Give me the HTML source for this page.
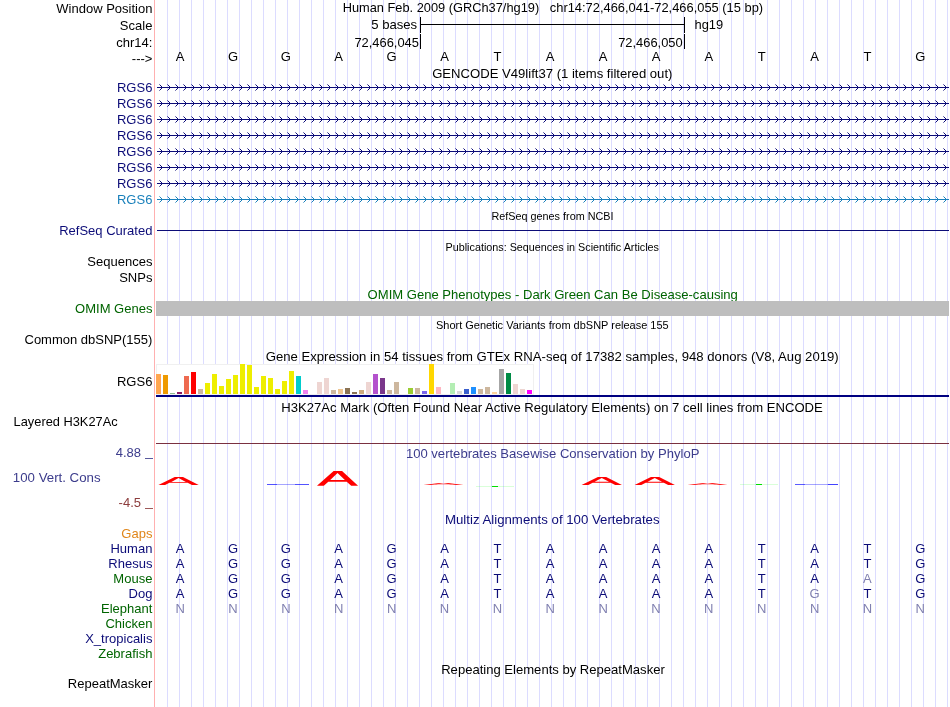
<!DOCTYPE html>
<html><head><meta charset="utf-8"><style>
html,body{margin:0;padding:0;background:#fff;width:950px;height:707px;overflow:hidden}
svg{display:block;will-change:transform}
text{font-family:"Liberation Sans",sans-serif}
</style></head><body>
<svg width="950" height="707" viewBox="0 0 950 707">
<rect width="950" height="707" fill="#fff"/>
<g>
<rect x="167" y="0" width="1" height="707" fill="#dcdcff" shape-rendering="crispEdges"/>
<rect x="179" y="0" width="1" height="707" fill="#dcdcff" shape-rendering="crispEdges"/>
<rect x="191" y="0" width="1" height="707" fill="#dcdcff" shape-rendering="crispEdges"/>
<rect x="203" y="0" width="1" height="707" fill="#dcdcff" shape-rendering="crispEdges"/>
<rect x="215" y="0" width="1" height="707" fill="#dcdcff" shape-rendering="crispEdges"/>
<rect x="227" y="0" width="1" height="707" fill="#dcdcff" shape-rendering="crispEdges"/>
<rect x="239" y="0" width="1" height="707" fill="#dcdcff" shape-rendering="crispEdges"/>
<rect x="251" y="0" width="1" height="707" fill="#dcdcff" shape-rendering="crispEdges"/>
<rect x="263" y="0" width="1" height="707" fill="#dcdcff" shape-rendering="crispEdges"/>
<rect x="275" y="0" width="1" height="707" fill="#dcdcff" shape-rendering="crispEdges"/>
<rect x="287" y="0" width="1" height="707" fill="#dcdcff" shape-rendering="crispEdges"/>
<rect x="299" y="0" width="1" height="707" fill="#dcdcff" shape-rendering="crispEdges"/>
<rect x="311" y="0" width="1" height="707" fill="#dcdcff" shape-rendering="crispEdges"/>
<rect x="323" y="0" width="1" height="707" fill="#dcdcff" shape-rendering="crispEdges"/>
<rect x="335" y="0" width="1" height="707" fill="#dcdcff" shape-rendering="crispEdges"/>
<rect x="347" y="0" width="1" height="707" fill="#dcdcff" shape-rendering="crispEdges"/>
<rect x="359" y="0" width="1" height="707" fill="#dcdcff" shape-rendering="crispEdges"/>
<rect x="371" y="0" width="1" height="707" fill="#dcdcff" shape-rendering="crispEdges"/>
<rect x="383" y="0" width="1" height="707" fill="#dcdcff" shape-rendering="crispEdges"/>
<rect x="395" y="0" width="1" height="707" fill="#dcdcff" shape-rendering="crispEdges"/>
<rect x="407" y="0" width="1" height="707" fill="#dcdcff" shape-rendering="crispEdges"/>
<rect x="419" y="0" width="1" height="707" fill="#dcdcff" shape-rendering="crispEdges"/>
<rect x="431" y="0" width="1" height="707" fill="#dcdcff" shape-rendering="crispEdges"/>
<rect x="443" y="0" width="1" height="707" fill="#dcdcff" shape-rendering="crispEdges"/>
<rect x="455" y="0" width="1" height="707" fill="#dcdcff" shape-rendering="crispEdges"/>
<rect x="467" y="0" width="1" height="707" fill="#dcdcff" shape-rendering="crispEdges"/>
<rect x="479" y="0" width="1" height="707" fill="#dcdcff" shape-rendering="crispEdges"/>
<rect x="491" y="0" width="1" height="707" fill="#dcdcff" shape-rendering="crispEdges"/>
<rect x="503" y="0" width="1" height="707" fill="#dcdcff" shape-rendering="crispEdges"/>
<rect x="515" y="0" width="1" height="707" fill="#dcdcff" shape-rendering="crispEdges"/>
<rect x="527" y="0" width="1" height="707" fill="#dcdcff" shape-rendering="crispEdges"/>
<rect x="539" y="0" width="1" height="707" fill="#dcdcff" shape-rendering="crispEdges"/>
<rect x="551" y="0" width="1" height="707" fill="#dcdcff" shape-rendering="crispEdges"/>
<rect x="563" y="0" width="1" height="707" fill="#dcdcff" shape-rendering="crispEdges"/>
<rect x="575" y="0" width="1" height="707" fill="#dcdcff" shape-rendering="crispEdges"/>
<rect x="587" y="0" width="1" height="707" fill="#dcdcff" shape-rendering="crispEdges"/>
<rect x="599" y="0" width="1" height="707" fill="#dcdcff" shape-rendering="crispEdges"/>
<rect x="611" y="0" width="1" height="707" fill="#dcdcff" shape-rendering="crispEdges"/>
<rect x="623" y="0" width="1" height="707" fill="#dcdcff" shape-rendering="crispEdges"/>
<rect x="635" y="0" width="1" height="707" fill="#dcdcff" shape-rendering="crispEdges"/>
<rect x="647" y="0" width="1" height="707" fill="#dcdcff" shape-rendering="crispEdges"/>
<rect x="659" y="0" width="1" height="707" fill="#dcdcff" shape-rendering="crispEdges"/>
<rect x="671" y="0" width="1" height="707" fill="#dcdcff" shape-rendering="crispEdges"/>
<rect x="683" y="0" width="1" height="707" fill="#dcdcff" shape-rendering="crispEdges"/>
<rect x="695" y="0" width="1" height="707" fill="#dcdcff" shape-rendering="crispEdges"/>
<rect x="707" y="0" width="1" height="707" fill="#dcdcff" shape-rendering="crispEdges"/>
<rect x="719" y="0" width="1" height="707" fill="#dcdcff" shape-rendering="crispEdges"/>
<rect x="731" y="0" width="1" height="707" fill="#dcdcff" shape-rendering="crispEdges"/>
<rect x="743" y="0" width="1" height="707" fill="#dcdcff" shape-rendering="crispEdges"/>
<rect x="755" y="0" width="1" height="707" fill="#dcdcff" shape-rendering="crispEdges"/>
<rect x="767" y="0" width="1" height="707" fill="#dcdcff" shape-rendering="crispEdges"/>
<rect x="779" y="0" width="1" height="707" fill="#dcdcff" shape-rendering="crispEdges"/>
<rect x="791" y="0" width="1" height="707" fill="#dcdcff" shape-rendering="crispEdges"/>
<rect x="803" y="0" width="1" height="707" fill="#dcdcff" shape-rendering="crispEdges"/>
<rect x="815" y="0" width="1" height="707" fill="#dcdcff" shape-rendering="crispEdges"/>
<rect x="827" y="0" width="1" height="707" fill="#dcdcff" shape-rendering="crispEdges"/>
<rect x="839" y="0" width="1" height="707" fill="#dcdcff" shape-rendering="crispEdges"/>
<rect x="851" y="0" width="1" height="707" fill="#dcdcff" shape-rendering="crispEdges"/>
<rect x="863" y="0" width="1" height="707" fill="#dcdcff" shape-rendering="crispEdges"/>
<rect x="875" y="0" width="1" height="707" fill="#dcdcff" shape-rendering="crispEdges"/>
<rect x="887" y="0" width="1" height="707" fill="#dcdcff" shape-rendering="crispEdges"/>
<rect x="899" y="0" width="1" height="707" fill="#dcdcff" shape-rendering="crispEdges"/>
<rect x="911" y="0" width="1" height="707" fill="#dcdcff" shape-rendering="crispEdges"/>
<rect x="923" y="0" width="1" height="707" fill="#dcdcff" shape-rendering="crispEdges"/>
<rect x="935" y="0" width="1" height="707" fill="#dcdcff" shape-rendering="crispEdges"/>
<rect x="947" y="0" width="1" height="707" fill="#dcdcff" shape-rendering="crispEdges"/>
<rect x="154" y="0" width="1" height="707" fill="#ffb0b0" shape-rendering="crispEdges"/>
<text x="152.4" y="12.7" fill="#000" font-size="13.0" text-anchor="end">Window Position</text>
<text x="152.4" y="29.5" fill="#000" font-size="13.0" text-anchor="end">Scale</text>
<text x="152.4" y="46.9" fill="#000" font-size="13.0" text-anchor="end">chr14:</text>
<text x="152.4" y="63" fill="#000" font-size="13.0" text-anchor="end">---&gt;</text>
<text x="342.7" y="11.6" fill="#000" font-size="13.0" textLength="196.5" lengthAdjust="spacingAndGlyphs">Human Feb. 2009 (GRCh37/hg19)</text>
<text x="549.8" y="11.6" fill="#000" font-size="13.0" textLength="213.3" lengthAdjust="spacingAndGlyphs">chr14:72,466,041-72,466,055 (15 bp)</text>
<text x="371.2" y="29" fill="#000" font-size="13.0" textLength="46" lengthAdjust="spacingAndGlyphs">5 bases</text>
<text x="694.5" y="29" fill="#000" font-size="13.0" textLength="28.7" lengthAdjust="spacingAndGlyphs">hg19</text>
<text x="354.4" y="47" fill="#000" font-size="13.0" textLength="64.6" lengthAdjust="spacingAndGlyphs">72,466,045</text>
<text x="618.2" y="47" fill="#000" font-size="13.0" textLength="64.5" lengthAdjust="spacingAndGlyphs">72,466,050</text>
<rect x="420" y="17" width="1" height="16" fill="#000" shape-rendering="crispEdges"/>
<rect x="684" y="17" width="1" height="16" fill="#000" shape-rendering="crispEdges"/>
<rect x="421" y="24" width="263" height="1" fill="#000" shape-rendering="crispEdges"/>
<rect x="420" y="34" width="1" height="15" fill="#000" shape-rendering="crispEdges"/>
<rect x="684" y="34" width="1" height="15" fill="#000" shape-rendering="crispEdges"/>
<text x="180.1" y="60.5" fill="#000" font-size="13.0" text-anchor="middle">A</text>
<text x="233.0" y="60.5" fill="#000" font-size="13.0" text-anchor="middle">G</text>
<text x="285.9" y="60.5" fill="#000" font-size="13.0" text-anchor="middle">G</text>
<text x="338.7" y="60.5" fill="#000" font-size="13.0" text-anchor="middle">A</text>
<text x="391.6" y="60.5" fill="#000" font-size="13.0" text-anchor="middle">G</text>
<text x="444.5" y="60.5" fill="#000" font-size="13.0" text-anchor="middle">A</text>
<text x="497.4" y="60.5" fill="#000" font-size="13.0" text-anchor="middle">T</text>
<text x="550.2" y="60.5" fill="#000" font-size="13.0" text-anchor="middle">A</text>
<text x="603.1" y="60.5" fill="#000" font-size="13.0" text-anchor="middle">A</text>
<text x="656.0" y="60.5" fill="#000" font-size="13.0" text-anchor="middle">A</text>
<text x="708.8" y="60.5" fill="#000" font-size="13.0" text-anchor="middle">A</text>
<text x="761.7" y="60.5" fill="#000" font-size="13.0" text-anchor="middle">T</text>
<text x="814.6" y="60.5" fill="#000" font-size="13.0" text-anchor="middle">A</text>
<text x="867.4" y="60.5" fill="#000" font-size="13.0" text-anchor="middle">T</text>
<text x="920.3" y="60.5" fill="#000" font-size="13.0" text-anchor="middle">G</text>
<text x="432.2" y="78" fill="#000" font-size="13.0" textLength="240.2" lengthAdjust="spacingAndGlyphs">GENCODE V49lift37 (1 items filtered out)</text>
<rect x="157" y="87" width="792" height="1" fill="#0c0c78" shape-rendering="crispEdges"/>
<path d="M160 85h1v1h-1z M161 86h1v3h-1z M160 89h1v1h-1z M168 85h1v1h-1z M169 86h1v3h-1z M168 89h1v1h-1z M176 85h1v1h-1z M177 86h1v3h-1z M176 89h1v1h-1z M184 85h1v1h-1z M185 86h1v3h-1z M184 89h1v1h-1z M192 85h1v1h-1z M193 86h1v3h-1z M192 89h1v1h-1z M200 85h1v1h-1z M201 86h1v3h-1z M200 89h1v1h-1z M208 85h1v1h-1z M209 86h1v3h-1z M208 89h1v1h-1z M216 85h1v1h-1z M217 86h1v3h-1z M216 89h1v1h-1z M224 85h1v1h-1z M225 86h1v3h-1z M224 89h1v1h-1z M232 85h1v1h-1z M233 86h1v3h-1z M232 89h1v1h-1z M240 85h1v1h-1z M241 86h1v3h-1z M240 89h1v1h-1z M248 85h1v1h-1z M249 86h1v3h-1z M248 89h1v1h-1z M256 85h1v1h-1z M257 86h1v3h-1z M256 89h1v1h-1z M264 85h1v1h-1z M265 86h1v3h-1z M264 89h1v1h-1z M272 85h1v1h-1z M273 86h1v3h-1z M272 89h1v1h-1z M280 85h1v1h-1z M281 86h1v3h-1z M280 89h1v1h-1z M288 85h1v1h-1z M289 86h1v3h-1z M288 89h1v1h-1z M296 85h1v1h-1z M297 86h1v3h-1z M296 89h1v1h-1z M304 85h1v1h-1z M305 86h1v3h-1z M304 89h1v1h-1z M312 85h1v1h-1z M313 86h1v3h-1z M312 89h1v1h-1z M320 85h1v1h-1z M321 86h1v3h-1z M320 89h1v1h-1z M328 85h1v1h-1z M329 86h1v3h-1z M328 89h1v1h-1z M336 85h1v1h-1z M337 86h1v3h-1z M336 89h1v1h-1z M344 85h1v1h-1z M345 86h1v3h-1z M344 89h1v1h-1z M352 85h1v1h-1z M353 86h1v3h-1z M352 89h1v1h-1z M360 85h1v1h-1z M361 86h1v3h-1z M360 89h1v1h-1z M368 85h1v1h-1z M369 86h1v3h-1z M368 89h1v1h-1z M376 85h1v1h-1z M377 86h1v3h-1z M376 89h1v1h-1z M384 85h1v1h-1z M385 86h1v3h-1z M384 89h1v1h-1z M392 85h1v1h-1z M393 86h1v3h-1z M392 89h1v1h-1z M400 85h1v1h-1z M401 86h1v3h-1z M400 89h1v1h-1z M408 85h1v1h-1z M409 86h1v3h-1z M408 89h1v1h-1z M416 85h1v1h-1z M417 86h1v3h-1z M416 89h1v1h-1z M424 85h1v1h-1z M425 86h1v3h-1z M424 89h1v1h-1z M432 85h1v1h-1z M433 86h1v3h-1z M432 89h1v1h-1z M440 85h1v1h-1z M441 86h1v3h-1z M440 89h1v1h-1z M448 85h1v1h-1z M449 86h1v3h-1z M448 89h1v1h-1z M456 85h1v1h-1z M457 86h1v3h-1z M456 89h1v1h-1z M464 85h1v1h-1z M465 86h1v3h-1z M464 89h1v1h-1z M472 85h1v1h-1z M473 86h1v3h-1z M472 89h1v1h-1z M480 85h1v1h-1z M481 86h1v3h-1z M480 89h1v1h-1z M488 85h1v1h-1z M489 86h1v3h-1z M488 89h1v1h-1z M496 85h1v1h-1z M497 86h1v3h-1z M496 89h1v1h-1z M504 85h1v1h-1z M505 86h1v3h-1z M504 89h1v1h-1z M512 85h1v1h-1z M513 86h1v3h-1z M512 89h1v1h-1z M520 85h1v1h-1z M521 86h1v3h-1z M520 89h1v1h-1z M528 85h1v1h-1z M529 86h1v3h-1z M528 89h1v1h-1z M536 85h1v1h-1z M537 86h1v3h-1z M536 89h1v1h-1z M544 85h1v1h-1z M545 86h1v3h-1z M544 89h1v1h-1z M552 85h1v1h-1z M553 86h1v3h-1z M552 89h1v1h-1z M560 85h1v1h-1z M561 86h1v3h-1z M560 89h1v1h-1z M568 85h1v1h-1z M569 86h1v3h-1z M568 89h1v1h-1z M576 85h1v1h-1z M577 86h1v3h-1z M576 89h1v1h-1z M584 85h1v1h-1z M585 86h1v3h-1z M584 89h1v1h-1z M592 85h1v1h-1z M593 86h1v3h-1z M592 89h1v1h-1z M600 85h1v1h-1z M601 86h1v3h-1z M600 89h1v1h-1z M608 85h1v1h-1z M609 86h1v3h-1z M608 89h1v1h-1z M616 85h1v1h-1z M617 86h1v3h-1z M616 89h1v1h-1z M624 85h1v1h-1z M625 86h1v3h-1z M624 89h1v1h-1z M632 85h1v1h-1z M633 86h1v3h-1z M632 89h1v1h-1z M640 85h1v1h-1z M641 86h1v3h-1z M640 89h1v1h-1z M648 85h1v1h-1z M649 86h1v3h-1z M648 89h1v1h-1z M656 85h1v1h-1z M657 86h1v3h-1z M656 89h1v1h-1z M664 85h1v1h-1z M665 86h1v3h-1z M664 89h1v1h-1z M672 85h1v1h-1z M673 86h1v3h-1z M672 89h1v1h-1z M680 85h1v1h-1z M681 86h1v3h-1z M680 89h1v1h-1z M688 85h1v1h-1z M689 86h1v3h-1z M688 89h1v1h-1z M696 85h1v1h-1z M697 86h1v3h-1z M696 89h1v1h-1z M704 85h1v1h-1z M705 86h1v3h-1z M704 89h1v1h-1z M712 85h1v1h-1z M713 86h1v3h-1z M712 89h1v1h-1z M720 85h1v1h-1z M721 86h1v3h-1z M720 89h1v1h-1z M728 85h1v1h-1z M729 86h1v3h-1z M728 89h1v1h-1z M736 85h1v1h-1z M737 86h1v3h-1z M736 89h1v1h-1z M744 85h1v1h-1z M745 86h1v3h-1z M744 89h1v1h-1z M752 85h1v1h-1z M753 86h1v3h-1z M752 89h1v1h-1z M760 85h1v1h-1z M761 86h1v3h-1z M760 89h1v1h-1z M768 85h1v1h-1z M769 86h1v3h-1z M768 89h1v1h-1z M776 85h1v1h-1z M777 86h1v3h-1z M776 89h1v1h-1z M784 85h1v1h-1z M785 86h1v3h-1z M784 89h1v1h-1z M792 85h1v1h-1z M793 86h1v3h-1z M792 89h1v1h-1z M800 85h1v1h-1z M801 86h1v3h-1z M800 89h1v1h-1z M808 85h1v1h-1z M809 86h1v3h-1z M808 89h1v1h-1z M816 85h1v1h-1z M817 86h1v3h-1z M816 89h1v1h-1z M824 85h1v1h-1z M825 86h1v3h-1z M824 89h1v1h-1z M832 85h1v1h-1z M833 86h1v3h-1z M832 89h1v1h-1z M840 85h1v1h-1z M841 86h1v3h-1z M840 89h1v1h-1z M848 85h1v1h-1z M849 86h1v3h-1z M848 89h1v1h-1z M856 85h1v1h-1z M857 86h1v3h-1z M856 89h1v1h-1z M864 85h1v1h-1z M865 86h1v3h-1z M864 89h1v1h-1z M872 85h1v1h-1z M873 86h1v3h-1z M872 89h1v1h-1z M880 85h1v1h-1z M881 86h1v3h-1z M880 89h1v1h-1z M888 85h1v1h-1z M889 86h1v3h-1z M888 89h1v1h-1z M896 85h1v1h-1z M897 86h1v3h-1z M896 89h1v1h-1z M904 85h1v1h-1z M905 86h1v3h-1z M904 89h1v1h-1z M912 85h1v1h-1z M913 86h1v3h-1z M912 89h1v1h-1z M920 85h1v1h-1z M921 86h1v3h-1z M920 89h1v1h-1z M928 85h1v1h-1z M929 86h1v3h-1z M928 89h1v1h-1z M936 85h1v1h-1z M937 86h1v3h-1z M936 89h1v1h-1z M944 85h1v1h-1z M945 86h1v3h-1z M944 89h1v1h-1z" fill="#0c0c78" shape-rendering="crispEdges"/>
<path d="M159 84h1v1h-1z M159 90h1v1h-1z M167 84h1v1h-1z M167 90h1v1h-1z M175 84h1v1h-1z M175 90h1v1h-1z M183 84h1v1h-1z M183 90h1v1h-1z M191 84h1v1h-1z M191 90h1v1h-1z M199 84h1v1h-1z M199 90h1v1h-1z M207 84h1v1h-1z M207 90h1v1h-1z M215 84h1v1h-1z M215 90h1v1h-1z M223 84h1v1h-1z M223 90h1v1h-1z M231 84h1v1h-1z M231 90h1v1h-1z M239 84h1v1h-1z M239 90h1v1h-1z M247 84h1v1h-1z M247 90h1v1h-1z M255 84h1v1h-1z M255 90h1v1h-1z M263 84h1v1h-1z M263 90h1v1h-1z M271 84h1v1h-1z M271 90h1v1h-1z M279 84h1v1h-1z M279 90h1v1h-1z M287 84h1v1h-1z M287 90h1v1h-1z M295 84h1v1h-1z M295 90h1v1h-1z M303 84h1v1h-1z M303 90h1v1h-1z M311 84h1v1h-1z M311 90h1v1h-1z M319 84h1v1h-1z M319 90h1v1h-1z M327 84h1v1h-1z M327 90h1v1h-1z M335 84h1v1h-1z M335 90h1v1h-1z M343 84h1v1h-1z M343 90h1v1h-1z M351 84h1v1h-1z M351 90h1v1h-1z M359 84h1v1h-1z M359 90h1v1h-1z M367 84h1v1h-1z M367 90h1v1h-1z M375 84h1v1h-1z M375 90h1v1h-1z M383 84h1v1h-1z M383 90h1v1h-1z M391 84h1v1h-1z M391 90h1v1h-1z M399 84h1v1h-1z M399 90h1v1h-1z M407 84h1v1h-1z M407 90h1v1h-1z M415 84h1v1h-1z M415 90h1v1h-1z M423 84h1v1h-1z M423 90h1v1h-1z M431 84h1v1h-1z M431 90h1v1h-1z M439 84h1v1h-1z M439 90h1v1h-1z M447 84h1v1h-1z M447 90h1v1h-1z M455 84h1v1h-1z M455 90h1v1h-1z M463 84h1v1h-1z M463 90h1v1h-1z M471 84h1v1h-1z M471 90h1v1h-1z M479 84h1v1h-1z M479 90h1v1h-1z M487 84h1v1h-1z M487 90h1v1h-1z M495 84h1v1h-1z M495 90h1v1h-1z M503 84h1v1h-1z M503 90h1v1h-1z M511 84h1v1h-1z M511 90h1v1h-1z M519 84h1v1h-1z M519 90h1v1h-1z M527 84h1v1h-1z M527 90h1v1h-1z M535 84h1v1h-1z M535 90h1v1h-1z M543 84h1v1h-1z M543 90h1v1h-1z M551 84h1v1h-1z M551 90h1v1h-1z M559 84h1v1h-1z M559 90h1v1h-1z M567 84h1v1h-1z M567 90h1v1h-1z M575 84h1v1h-1z M575 90h1v1h-1z M583 84h1v1h-1z M583 90h1v1h-1z M591 84h1v1h-1z M591 90h1v1h-1z M599 84h1v1h-1z M599 90h1v1h-1z M607 84h1v1h-1z M607 90h1v1h-1z M615 84h1v1h-1z M615 90h1v1h-1z M623 84h1v1h-1z M623 90h1v1h-1z M631 84h1v1h-1z M631 90h1v1h-1z M639 84h1v1h-1z M639 90h1v1h-1z M647 84h1v1h-1z M647 90h1v1h-1z M655 84h1v1h-1z M655 90h1v1h-1z M663 84h1v1h-1z M663 90h1v1h-1z M671 84h1v1h-1z M671 90h1v1h-1z M679 84h1v1h-1z M679 90h1v1h-1z M687 84h1v1h-1z M687 90h1v1h-1z M695 84h1v1h-1z M695 90h1v1h-1z M703 84h1v1h-1z M703 90h1v1h-1z M711 84h1v1h-1z M711 90h1v1h-1z M719 84h1v1h-1z M719 90h1v1h-1z M727 84h1v1h-1z M727 90h1v1h-1z M735 84h1v1h-1z M735 90h1v1h-1z M743 84h1v1h-1z M743 90h1v1h-1z M751 84h1v1h-1z M751 90h1v1h-1z M759 84h1v1h-1z M759 90h1v1h-1z M767 84h1v1h-1z M767 90h1v1h-1z M775 84h1v1h-1z M775 90h1v1h-1z M783 84h1v1h-1z M783 90h1v1h-1z M791 84h1v1h-1z M791 90h1v1h-1z M799 84h1v1h-1z M799 90h1v1h-1z M807 84h1v1h-1z M807 90h1v1h-1z M815 84h1v1h-1z M815 90h1v1h-1z M823 84h1v1h-1z M823 90h1v1h-1z M831 84h1v1h-1z M831 90h1v1h-1z M839 84h1v1h-1z M839 90h1v1h-1z M847 84h1v1h-1z M847 90h1v1h-1z M855 84h1v1h-1z M855 90h1v1h-1z M863 84h1v1h-1z M863 90h1v1h-1z M871 84h1v1h-1z M871 90h1v1h-1z M879 84h1v1h-1z M879 90h1v1h-1z M887 84h1v1h-1z M887 90h1v1h-1z M895 84h1v1h-1z M895 90h1v1h-1z M903 84h1v1h-1z M903 90h1v1h-1z M911 84h1v1h-1z M911 90h1v1h-1z M919 84h1v1h-1z M919 90h1v1h-1z M927 84h1v1h-1z M927 90h1v1h-1z M935 84h1v1h-1z M935 90h1v1h-1z M943 84h1v1h-1z M943 90h1v1h-1z" fill="#0c0c78" opacity="0.55" shape-rendering="crispEdges"/>
<text x="152.4" y="91.7" fill="#0c0c78" font-size="13.0" text-anchor="end">RGS6</text>
<rect x="157" y="103" width="792" height="1" fill="#0c0c78" shape-rendering="crispEdges"/>
<path d="M160 101h1v1h-1z M161 102h1v3h-1z M160 105h1v1h-1z M168 101h1v1h-1z M169 102h1v3h-1z M168 105h1v1h-1z M176 101h1v1h-1z M177 102h1v3h-1z M176 105h1v1h-1z M184 101h1v1h-1z M185 102h1v3h-1z M184 105h1v1h-1z M192 101h1v1h-1z M193 102h1v3h-1z M192 105h1v1h-1z M200 101h1v1h-1z M201 102h1v3h-1z M200 105h1v1h-1z M208 101h1v1h-1z M209 102h1v3h-1z M208 105h1v1h-1z M216 101h1v1h-1z M217 102h1v3h-1z M216 105h1v1h-1z M224 101h1v1h-1z M225 102h1v3h-1z M224 105h1v1h-1z M232 101h1v1h-1z M233 102h1v3h-1z M232 105h1v1h-1z M240 101h1v1h-1z M241 102h1v3h-1z M240 105h1v1h-1z M248 101h1v1h-1z M249 102h1v3h-1z M248 105h1v1h-1z M256 101h1v1h-1z M257 102h1v3h-1z M256 105h1v1h-1z M264 101h1v1h-1z M265 102h1v3h-1z M264 105h1v1h-1z M272 101h1v1h-1z M273 102h1v3h-1z M272 105h1v1h-1z M280 101h1v1h-1z M281 102h1v3h-1z M280 105h1v1h-1z M288 101h1v1h-1z M289 102h1v3h-1z M288 105h1v1h-1z M296 101h1v1h-1z M297 102h1v3h-1z M296 105h1v1h-1z M304 101h1v1h-1z M305 102h1v3h-1z M304 105h1v1h-1z M312 101h1v1h-1z M313 102h1v3h-1z M312 105h1v1h-1z M320 101h1v1h-1z M321 102h1v3h-1z M320 105h1v1h-1z M328 101h1v1h-1z M329 102h1v3h-1z M328 105h1v1h-1z M336 101h1v1h-1z M337 102h1v3h-1z M336 105h1v1h-1z M344 101h1v1h-1z M345 102h1v3h-1z M344 105h1v1h-1z M352 101h1v1h-1z M353 102h1v3h-1z M352 105h1v1h-1z M360 101h1v1h-1z M361 102h1v3h-1z M360 105h1v1h-1z M368 101h1v1h-1z M369 102h1v3h-1z M368 105h1v1h-1z M376 101h1v1h-1z M377 102h1v3h-1z M376 105h1v1h-1z M384 101h1v1h-1z M385 102h1v3h-1z M384 105h1v1h-1z M392 101h1v1h-1z M393 102h1v3h-1z M392 105h1v1h-1z M400 101h1v1h-1z M401 102h1v3h-1z M400 105h1v1h-1z M408 101h1v1h-1z M409 102h1v3h-1z M408 105h1v1h-1z M416 101h1v1h-1z M417 102h1v3h-1z M416 105h1v1h-1z M424 101h1v1h-1z M425 102h1v3h-1z M424 105h1v1h-1z M432 101h1v1h-1z M433 102h1v3h-1z M432 105h1v1h-1z M440 101h1v1h-1z M441 102h1v3h-1z M440 105h1v1h-1z M448 101h1v1h-1z M449 102h1v3h-1z M448 105h1v1h-1z M456 101h1v1h-1z M457 102h1v3h-1z M456 105h1v1h-1z M464 101h1v1h-1z M465 102h1v3h-1z M464 105h1v1h-1z M472 101h1v1h-1z M473 102h1v3h-1z M472 105h1v1h-1z M480 101h1v1h-1z M481 102h1v3h-1z M480 105h1v1h-1z M488 101h1v1h-1z M489 102h1v3h-1z M488 105h1v1h-1z M496 101h1v1h-1z M497 102h1v3h-1z M496 105h1v1h-1z M504 101h1v1h-1z M505 102h1v3h-1z M504 105h1v1h-1z M512 101h1v1h-1z M513 102h1v3h-1z M512 105h1v1h-1z M520 101h1v1h-1z M521 102h1v3h-1z M520 105h1v1h-1z M528 101h1v1h-1z M529 102h1v3h-1z M528 105h1v1h-1z M536 101h1v1h-1z M537 102h1v3h-1z M536 105h1v1h-1z M544 101h1v1h-1z M545 102h1v3h-1z M544 105h1v1h-1z M552 101h1v1h-1z M553 102h1v3h-1z M552 105h1v1h-1z M560 101h1v1h-1z M561 102h1v3h-1z M560 105h1v1h-1z M568 101h1v1h-1z M569 102h1v3h-1z M568 105h1v1h-1z M576 101h1v1h-1z M577 102h1v3h-1z M576 105h1v1h-1z M584 101h1v1h-1z M585 102h1v3h-1z M584 105h1v1h-1z M592 101h1v1h-1z M593 102h1v3h-1z M592 105h1v1h-1z M600 101h1v1h-1z M601 102h1v3h-1z M600 105h1v1h-1z M608 101h1v1h-1z M609 102h1v3h-1z M608 105h1v1h-1z M616 101h1v1h-1z M617 102h1v3h-1z M616 105h1v1h-1z M624 101h1v1h-1z M625 102h1v3h-1z M624 105h1v1h-1z M632 101h1v1h-1z M633 102h1v3h-1z M632 105h1v1h-1z M640 101h1v1h-1z M641 102h1v3h-1z M640 105h1v1h-1z M648 101h1v1h-1z M649 102h1v3h-1z M648 105h1v1h-1z M656 101h1v1h-1z M657 102h1v3h-1z M656 105h1v1h-1z M664 101h1v1h-1z M665 102h1v3h-1z M664 105h1v1h-1z M672 101h1v1h-1z M673 102h1v3h-1z M672 105h1v1h-1z M680 101h1v1h-1z M681 102h1v3h-1z M680 105h1v1h-1z M688 101h1v1h-1z M689 102h1v3h-1z M688 105h1v1h-1z M696 101h1v1h-1z M697 102h1v3h-1z M696 105h1v1h-1z M704 101h1v1h-1z M705 102h1v3h-1z M704 105h1v1h-1z M712 101h1v1h-1z M713 102h1v3h-1z M712 105h1v1h-1z M720 101h1v1h-1z M721 102h1v3h-1z M720 105h1v1h-1z M728 101h1v1h-1z M729 102h1v3h-1z M728 105h1v1h-1z M736 101h1v1h-1z M737 102h1v3h-1z M736 105h1v1h-1z M744 101h1v1h-1z M745 102h1v3h-1z M744 105h1v1h-1z M752 101h1v1h-1z M753 102h1v3h-1z M752 105h1v1h-1z M760 101h1v1h-1z M761 102h1v3h-1z M760 105h1v1h-1z M768 101h1v1h-1z M769 102h1v3h-1z M768 105h1v1h-1z M776 101h1v1h-1z M777 102h1v3h-1z M776 105h1v1h-1z M784 101h1v1h-1z M785 102h1v3h-1z M784 105h1v1h-1z M792 101h1v1h-1z M793 102h1v3h-1z M792 105h1v1h-1z M800 101h1v1h-1z M801 102h1v3h-1z M800 105h1v1h-1z M808 101h1v1h-1z M809 102h1v3h-1z M808 105h1v1h-1z M816 101h1v1h-1z M817 102h1v3h-1z M816 105h1v1h-1z M824 101h1v1h-1z M825 102h1v3h-1z M824 105h1v1h-1z M832 101h1v1h-1z M833 102h1v3h-1z M832 105h1v1h-1z M840 101h1v1h-1z M841 102h1v3h-1z M840 105h1v1h-1z M848 101h1v1h-1z M849 102h1v3h-1z M848 105h1v1h-1z M856 101h1v1h-1z M857 102h1v3h-1z M856 105h1v1h-1z M864 101h1v1h-1z M865 102h1v3h-1z M864 105h1v1h-1z M872 101h1v1h-1z M873 102h1v3h-1z M872 105h1v1h-1z M880 101h1v1h-1z M881 102h1v3h-1z M880 105h1v1h-1z M888 101h1v1h-1z M889 102h1v3h-1z M888 105h1v1h-1z M896 101h1v1h-1z M897 102h1v3h-1z M896 105h1v1h-1z M904 101h1v1h-1z M905 102h1v3h-1z M904 105h1v1h-1z M912 101h1v1h-1z M913 102h1v3h-1z M912 105h1v1h-1z M920 101h1v1h-1z M921 102h1v3h-1z M920 105h1v1h-1z M928 101h1v1h-1z M929 102h1v3h-1z M928 105h1v1h-1z M936 101h1v1h-1z M937 102h1v3h-1z M936 105h1v1h-1z M944 101h1v1h-1z M945 102h1v3h-1z M944 105h1v1h-1z" fill="#0c0c78" shape-rendering="crispEdges"/>
<path d="M159 100h1v1h-1z M159 106h1v1h-1z M167 100h1v1h-1z M167 106h1v1h-1z M175 100h1v1h-1z M175 106h1v1h-1z M183 100h1v1h-1z M183 106h1v1h-1z M191 100h1v1h-1z M191 106h1v1h-1z M199 100h1v1h-1z M199 106h1v1h-1z M207 100h1v1h-1z M207 106h1v1h-1z M215 100h1v1h-1z M215 106h1v1h-1z M223 100h1v1h-1z M223 106h1v1h-1z M231 100h1v1h-1z M231 106h1v1h-1z M239 100h1v1h-1z M239 106h1v1h-1z M247 100h1v1h-1z M247 106h1v1h-1z M255 100h1v1h-1z M255 106h1v1h-1z M263 100h1v1h-1z M263 106h1v1h-1z M271 100h1v1h-1z M271 106h1v1h-1z M279 100h1v1h-1z M279 106h1v1h-1z M287 100h1v1h-1z M287 106h1v1h-1z M295 100h1v1h-1z M295 106h1v1h-1z M303 100h1v1h-1z M303 106h1v1h-1z M311 100h1v1h-1z M311 106h1v1h-1z M319 100h1v1h-1z M319 106h1v1h-1z M327 100h1v1h-1z M327 106h1v1h-1z M335 100h1v1h-1z M335 106h1v1h-1z M343 100h1v1h-1z M343 106h1v1h-1z M351 100h1v1h-1z M351 106h1v1h-1z M359 100h1v1h-1z M359 106h1v1h-1z M367 100h1v1h-1z M367 106h1v1h-1z M375 100h1v1h-1z M375 106h1v1h-1z M383 100h1v1h-1z M383 106h1v1h-1z M391 100h1v1h-1z M391 106h1v1h-1z M399 100h1v1h-1z M399 106h1v1h-1z M407 100h1v1h-1z M407 106h1v1h-1z M415 100h1v1h-1z M415 106h1v1h-1z M423 100h1v1h-1z M423 106h1v1h-1z M431 100h1v1h-1z M431 106h1v1h-1z M439 100h1v1h-1z M439 106h1v1h-1z M447 100h1v1h-1z M447 106h1v1h-1z M455 100h1v1h-1z M455 106h1v1h-1z M463 100h1v1h-1z M463 106h1v1h-1z M471 100h1v1h-1z M471 106h1v1h-1z M479 100h1v1h-1z M479 106h1v1h-1z M487 100h1v1h-1z M487 106h1v1h-1z M495 100h1v1h-1z M495 106h1v1h-1z M503 100h1v1h-1z M503 106h1v1h-1z M511 100h1v1h-1z M511 106h1v1h-1z M519 100h1v1h-1z M519 106h1v1h-1z M527 100h1v1h-1z M527 106h1v1h-1z M535 100h1v1h-1z M535 106h1v1h-1z M543 100h1v1h-1z M543 106h1v1h-1z M551 100h1v1h-1z M551 106h1v1h-1z M559 100h1v1h-1z M559 106h1v1h-1z M567 100h1v1h-1z M567 106h1v1h-1z M575 100h1v1h-1z M575 106h1v1h-1z M583 100h1v1h-1z M583 106h1v1h-1z M591 100h1v1h-1z M591 106h1v1h-1z M599 100h1v1h-1z M599 106h1v1h-1z M607 100h1v1h-1z M607 106h1v1h-1z M615 100h1v1h-1z M615 106h1v1h-1z M623 100h1v1h-1z M623 106h1v1h-1z M631 100h1v1h-1z M631 106h1v1h-1z M639 100h1v1h-1z M639 106h1v1h-1z M647 100h1v1h-1z M647 106h1v1h-1z M655 100h1v1h-1z M655 106h1v1h-1z M663 100h1v1h-1z M663 106h1v1h-1z M671 100h1v1h-1z M671 106h1v1h-1z M679 100h1v1h-1z M679 106h1v1h-1z M687 100h1v1h-1z M687 106h1v1h-1z M695 100h1v1h-1z M695 106h1v1h-1z M703 100h1v1h-1z M703 106h1v1h-1z M711 100h1v1h-1z M711 106h1v1h-1z M719 100h1v1h-1z M719 106h1v1h-1z M727 100h1v1h-1z M727 106h1v1h-1z M735 100h1v1h-1z M735 106h1v1h-1z M743 100h1v1h-1z M743 106h1v1h-1z M751 100h1v1h-1z M751 106h1v1h-1z M759 100h1v1h-1z M759 106h1v1h-1z M767 100h1v1h-1z M767 106h1v1h-1z M775 100h1v1h-1z M775 106h1v1h-1z M783 100h1v1h-1z M783 106h1v1h-1z M791 100h1v1h-1z M791 106h1v1h-1z M799 100h1v1h-1z M799 106h1v1h-1z M807 100h1v1h-1z M807 106h1v1h-1z M815 100h1v1h-1z M815 106h1v1h-1z M823 100h1v1h-1z M823 106h1v1h-1z M831 100h1v1h-1z M831 106h1v1h-1z M839 100h1v1h-1z M839 106h1v1h-1z M847 100h1v1h-1z M847 106h1v1h-1z M855 100h1v1h-1z M855 106h1v1h-1z M863 100h1v1h-1z M863 106h1v1h-1z M871 100h1v1h-1z M871 106h1v1h-1z M879 100h1v1h-1z M879 106h1v1h-1z M887 100h1v1h-1z M887 106h1v1h-1z M895 100h1v1h-1z M895 106h1v1h-1z M903 100h1v1h-1z M903 106h1v1h-1z M911 100h1v1h-1z M911 106h1v1h-1z M919 100h1v1h-1z M919 106h1v1h-1z M927 100h1v1h-1z M927 106h1v1h-1z M935 100h1v1h-1z M935 106h1v1h-1z M943 100h1v1h-1z M943 106h1v1h-1z" fill="#0c0c78" opacity="0.55" shape-rendering="crispEdges"/>
<text x="152.4" y="107.7" fill="#0c0c78" font-size="13.0" text-anchor="end">RGS6</text>
<rect x="157" y="119" width="792" height="1" fill="#0c0c78" shape-rendering="crispEdges"/>
<path d="M160 117h1v1h-1z M161 118h1v3h-1z M160 121h1v1h-1z M168 117h1v1h-1z M169 118h1v3h-1z M168 121h1v1h-1z M176 117h1v1h-1z M177 118h1v3h-1z M176 121h1v1h-1z M184 117h1v1h-1z M185 118h1v3h-1z M184 121h1v1h-1z M192 117h1v1h-1z M193 118h1v3h-1z M192 121h1v1h-1z M200 117h1v1h-1z M201 118h1v3h-1z M200 121h1v1h-1z M208 117h1v1h-1z M209 118h1v3h-1z M208 121h1v1h-1z M216 117h1v1h-1z M217 118h1v3h-1z M216 121h1v1h-1z M224 117h1v1h-1z M225 118h1v3h-1z M224 121h1v1h-1z M232 117h1v1h-1z M233 118h1v3h-1z M232 121h1v1h-1z M240 117h1v1h-1z M241 118h1v3h-1z M240 121h1v1h-1z M248 117h1v1h-1z M249 118h1v3h-1z M248 121h1v1h-1z M256 117h1v1h-1z M257 118h1v3h-1z M256 121h1v1h-1z M264 117h1v1h-1z M265 118h1v3h-1z M264 121h1v1h-1z M272 117h1v1h-1z M273 118h1v3h-1z M272 121h1v1h-1z M280 117h1v1h-1z M281 118h1v3h-1z M280 121h1v1h-1z M288 117h1v1h-1z M289 118h1v3h-1z M288 121h1v1h-1z M296 117h1v1h-1z M297 118h1v3h-1z M296 121h1v1h-1z M304 117h1v1h-1z M305 118h1v3h-1z M304 121h1v1h-1z M312 117h1v1h-1z M313 118h1v3h-1z M312 121h1v1h-1z M320 117h1v1h-1z M321 118h1v3h-1z M320 121h1v1h-1z M328 117h1v1h-1z M329 118h1v3h-1z M328 121h1v1h-1z M336 117h1v1h-1z M337 118h1v3h-1z M336 121h1v1h-1z M344 117h1v1h-1z M345 118h1v3h-1z M344 121h1v1h-1z M352 117h1v1h-1z M353 118h1v3h-1z M352 121h1v1h-1z M360 117h1v1h-1z M361 118h1v3h-1z M360 121h1v1h-1z M368 117h1v1h-1z M369 118h1v3h-1z M368 121h1v1h-1z M376 117h1v1h-1z M377 118h1v3h-1z M376 121h1v1h-1z M384 117h1v1h-1z M385 118h1v3h-1z M384 121h1v1h-1z M392 117h1v1h-1z M393 118h1v3h-1z M392 121h1v1h-1z M400 117h1v1h-1z M401 118h1v3h-1z M400 121h1v1h-1z M408 117h1v1h-1z M409 118h1v3h-1z M408 121h1v1h-1z M416 117h1v1h-1z M417 118h1v3h-1z M416 121h1v1h-1z M424 117h1v1h-1z M425 118h1v3h-1z M424 121h1v1h-1z M432 117h1v1h-1z M433 118h1v3h-1z M432 121h1v1h-1z M440 117h1v1h-1z M441 118h1v3h-1z M440 121h1v1h-1z M448 117h1v1h-1z M449 118h1v3h-1z M448 121h1v1h-1z M456 117h1v1h-1z M457 118h1v3h-1z M456 121h1v1h-1z M464 117h1v1h-1z M465 118h1v3h-1z M464 121h1v1h-1z M472 117h1v1h-1z M473 118h1v3h-1z M472 121h1v1h-1z M480 117h1v1h-1z M481 118h1v3h-1z M480 121h1v1h-1z M488 117h1v1h-1z M489 118h1v3h-1z M488 121h1v1h-1z M496 117h1v1h-1z M497 118h1v3h-1z M496 121h1v1h-1z M504 117h1v1h-1z M505 118h1v3h-1z M504 121h1v1h-1z M512 117h1v1h-1z M513 118h1v3h-1z M512 121h1v1h-1z M520 117h1v1h-1z M521 118h1v3h-1z M520 121h1v1h-1z M528 117h1v1h-1z M529 118h1v3h-1z M528 121h1v1h-1z M536 117h1v1h-1z M537 118h1v3h-1z M536 121h1v1h-1z M544 117h1v1h-1z M545 118h1v3h-1z M544 121h1v1h-1z M552 117h1v1h-1z M553 118h1v3h-1z M552 121h1v1h-1z M560 117h1v1h-1z M561 118h1v3h-1z M560 121h1v1h-1z M568 117h1v1h-1z M569 118h1v3h-1z M568 121h1v1h-1z M576 117h1v1h-1z M577 118h1v3h-1z M576 121h1v1h-1z M584 117h1v1h-1z M585 118h1v3h-1z M584 121h1v1h-1z M592 117h1v1h-1z M593 118h1v3h-1z M592 121h1v1h-1z M600 117h1v1h-1z M601 118h1v3h-1z M600 121h1v1h-1z M608 117h1v1h-1z M609 118h1v3h-1z M608 121h1v1h-1z M616 117h1v1h-1z M617 118h1v3h-1z M616 121h1v1h-1z M624 117h1v1h-1z M625 118h1v3h-1z M624 121h1v1h-1z M632 117h1v1h-1z M633 118h1v3h-1z M632 121h1v1h-1z M640 117h1v1h-1z M641 118h1v3h-1z M640 121h1v1h-1z M648 117h1v1h-1z M649 118h1v3h-1z M648 121h1v1h-1z M656 117h1v1h-1z M657 118h1v3h-1z M656 121h1v1h-1z M664 117h1v1h-1z M665 118h1v3h-1z M664 121h1v1h-1z M672 117h1v1h-1z M673 118h1v3h-1z M672 121h1v1h-1z M680 117h1v1h-1z M681 118h1v3h-1z M680 121h1v1h-1z M688 117h1v1h-1z M689 118h1v3h-1z M688 121h1v1h-1z M696 117h1v1h-1z M697 118h1v3h-1z M696 121h1v1h-1z M704 117h1v1h-1z M705 118h1v3h-1z M704 121h1v1h-1z M712 117h1v1h-1z M713 118h1v3h-1z M712 121h1v1h-1z M720 117h1v1h-1z M721 118h1v3h-1z M720 121h1v1h-1z M728 117h1v1h-1z M729 118h1v3h-1z M728 121h1v1h-1z M736 117h1v1h-1z M737 118h1v3h-1z M736 121h1v1h-1z M744 117h1v1h-1z M745 118h1v3h-1z M744 121h1v1h-1z M752 117h1v1h-1z M753 118h1v3h-1z M752 121h1v1h-1z M760 117h1v1h-1z M761 118h1v3h-1z M760 121h1v1h-1z M768 117h1v1h-1z M769 118h1v3h-1z M768 121h1v1h-1z M776 117h1v1h-1z M777 118h1v3h-1z M776 121h1v1h-1z M784 117h1v1h-1z M785 118h1v3h-1z M784 121h1v1h-1z M792 117h1v1h-1z M793 118h1v3h-1z M792 121h1v1h-1z M800 117h1v1h-1z M801 118h1v3h-1z M800 121h1v1h-1z M808 117h1v1h-1z M809 118h1v3h-1z M808 121h1v1h-1z M816 117h1v1h-1z M817 118h1v3h-1z M816 121h1v1h-1z M824 117h1v1h-1z M825 118h1v3h-1z M824 121h1v1h-1z M832 117h1v1h-1z M833 118h1v3h-1z M832 121h1v1h-1z M840 117h1v1h-1z M841 118h1v3h-1z M840 121h1v1h-1z M848 117h1v1h-1z M849 118h1v3h-1z M848 121h1v1h-1z M856 117h1v1h-1z M857 118h1v3h-1z M856 121h1v1h-1z M864 117h1v1h-1z M865 118h1v3h-1z M864 121h1v1h-1z M872 117h1v1h-1z M873 118h1v3h-1z M872 121h1v1h-1z M880 117h1v1h-1z M881 118h1v3h-1z M880 121h1v1h-1z M888 117h1v1h-1z M889 118h1v3h-1z M888 121h1v1h-1z M896 117h1v1h-1z M897 118h1v3h-1z M896 121h1v1h-1z M904 117h1v1h-1z M905 118h1v3h-1z M904 121h1v1h-1z M912 117h1v1h-1z M913 118h1v3h-1z M912 121h1v1h-1z M920 117h1v1h-1z M921 118h1v3h-1z M920 121h1v1h-1z M928 117h1v1h-1z M929 118h1v3h-1z M928 121h1v1h-1z M936 117h1v1h-1z M937 118h1v3h-1z M936 121h1v1h-1z M944 117h1v1h-1z M945 118h1v3h-1z M944 121h1v1h-1z" fill="#0c0c78" shape-rendering="crispEdges"/>
<path d="M159 116h1v1h-1z M159 122h1v1h-1z M167 116h1v1h-1z M167 122h1v1h-1z M175 116h1v1h-1z M175 122h1v1h-1z M183 116h1v1h-1z M183 122h1v1h-1z M191 116h1v1h-1z M191 122h1v1h-1z M199 116h1v1h-1z M199 122h1v1h-1z M207 116h1v1h-1z M207 122h1v1h-1z M215 116h1v1h-1z M215 122h1v1h-1z M223 116h1v1h-1z M223 122h1v1h-1z M231 116h1v1h-1z M231 122h1v1h-1z M239 116h1v1h-1z M239 122h1v1h-1z M247 116h1v1h-1z M247 122h1v1h-1z M255 116h1v1h-1z M255 122h1v1h-1z M263 116h1v1h-1z M263 122h1v1h-1z M271 116h1v1h-1z M271 122h1v1h-1z M279 116h1v1h-1z M279 122h1v1h-1z M287 116h1v1h-1z M287 122h1v1h-1z M295 116h1v1h-1z M295 122h1v1h-1z M303 116h1v1h-1z M303 122h1v1h-1z M311 116h1v1h-1z M311 122h1v1h-1z M319 116h1v1h-1z M319 122h1v1h-1z M327 116h1v1h-1z M327 122h1v1h-1z M335 116h1v1h-1z M335 122h1v1h-1z M343 116h1v1h-1z M343 122h1v1h-1z M351 116h1v1h-1z M351 122h1v1h-1z M359 116h1v1h-1z M359 122h1v1h-1z M367 116h1v1h-1z M367 122h1v1h-1z M375 116h1v1h-1z M375 122h1v1h-1z M383 116h1v1h-1z M383 122h1v1h-1z M391 116h1v1h-1z M391 122h1v1h-1z M399 116h1v1h-1z M399 122h1v1h-1z M407 116h1v1h-1z M407 122h1v1h-1z M415 116h1v1h-1z M415 122h1v1h-1z M423 116h1v1h-1z M423 122h1v1h-1z M431 116h1v1h-1z M431 122h1v1h-1z M439 116h1v1h-1z M439 122h1v1h-1z M447 116h1v1h-1z M447 122h1v1h-1z M455 116h1v1h-1z M455 122h1v1h-1z M463 116h1v1h-1z M463 122h1v1h-1z M471 116h1v1h-1z M471 122h1v1h-1z M479 116h1v1h-1z M479 122h1v1h-1z M487 116h1v1h-1z M487 122h1v1h-1z M495 116h1v1h-1z M495 122h1v1h-1z M503 116h1v1h-1z M503 122h1v1h-1z M511 116h1v1h-1z M511 122h1v1h-1z M519 116h1v1h-1z M519 122h1v1h-1z M527 116h1v1h-1z M527 122h1v1h-1z M535 116h1v1h-1z M535 122h1v1h-1z M543 116h1v1h-1z M543 122h1v1h-1z M551 116h1v1h-1z M551 122h1v1h-1z M559 116h1v1h-1z M559 122h1v1h-1z M567 116h1v1h-1z M567 122h1v1h-1z M575 116h1v1h-1z M575 122h1v1h-1z M583 116h1v1h-1z M583 122h1v1h-1z M591 116h1v1h-1z M591 122h1v1h-1z M599 116h1v1h-1z M599 122h1v1h-1z M607 116h1v1h-1z M607 122h1v1h-1z M615 116h1v1h-1z M615 122h1v1h-1z M623 116h1v1h-1z M623 122h1v1h-1z M631 116h1v1h-1z M631 122h1v1h-1z M639 116h1v1h-1z M639 122h1v1h-1z M647 116h1v1h-1z M647 122h1v1h-1z M655 116h1v1h-1z M655 122h1v1h-1z M663 116h1v1h-1z M663 122h1v1h-1z M671 116h1v1h-1z M671 122h1v1h-1z M679 116h1v1h-1z M679 122h1v1h-1z M687 116h1v1h-1z M687 122h1v1h-1z M695 116h1v1h-1z M695 122h1v1h-1z M703 116h1v1h-1z M703 122h1v1h-1z M711 116h1v1h-1z M711 122h1v1h-1z M719 116h1v1h-1z M719 122h1v1h-1z M727 116h1v1h-1z M727 122h1v1h-1z M735 116h1v1h-1z M735 122h1v1h-1z M743 116h1v1h-1z M743 122h1v1h-1z M751 116h1v1h-1z M751 122h1v1h-1z M759 116h1v1h-1z M759 122h1v1h-1z M767 116h1v1h-1z M767 122h1v1h-1z M775 116h1v1h-1z M775 122h1v1h-1z M783 116h1v1h-1z M783 122h1v1h-1z M791 116h1v1h-1z M791 122h1v1h-1z M799 116h1v1h-1z M799 122h1v1h-1z M807 116h1v1h-1z M807 122h1v1h-1z M815 116h1v1h-1z M815 122h1v1h-1z M823 116h1v1h-1z M823 122h1v1h-1z M831 116h1v1h-1z M831 122h1v1h-1z M839 116h1v1h-1z M839 122h1v1h-1z M847 116h1v1h-1z M847 122h1v1h-1z M855 116h1v1h-1z M855 122h1v1h-1z M863 116h1v1h-1z M863 122h1v1h-1z M871 116h1v1h-1z M871 122h1v1h-1z M879 116h1v1h-1z M879 122h1v1h-1z M887 116h1v1h-1z M887 122h1v1h-1z M895 116h1v1h-1z M895 122h1v1h-1z M903 116h1v1h-1z M903 122h1v1h-1z M911 116h1v1h-1z M911 122h1v1h-1z M919 116h1v1h-1z M919 122h1v1h-1z M927 116h1v1h-1z M927 122h1v1h-1z M935 116h1v1h-1z M935 122h1v1h-1z M943 116h1v1h-1z M943 122h1v1h-1z" fill="#0c0c78" opacity="0.55" shape-rendering="crispEdges"/>
<text x="152.4" y="123.7" fill="#0c0c78" font-size="13.0" text-anchor="end">RGS6</text>
<rect x="157" y="135" width="792" height="1" fill="#0c0c78" shape-rendering="crispEdges"/>
<path d="M160 133h1v1h-1z M161 134h1v3h-1z M160 137h1v1h-1z M168 133h1v1h-1z M169 134h1v3h-1z M168 137h1v1h-1z M176 133h1v1h-1z M177 134h1v3h-1z M176 137h1v1h-1z M184 133h1v1h-1z M185 134h1v3h-1z M184 137h1v1h-1z M192 133h1v1h-1z M193 134h1v3h-1z M192 137h1v1h-1z M200 133h1v1h-1z M201 134h1v3h-1z M200 137h1v1h-1z M208 133h1v1h-1z M209 134h1v3h-1z M208 137h1v1h-1z M216 133h1v1h-1z M217 134h1v3h-1z M216 137h1v1h-1z M224 133h1v1h-1z M225 134h1v3h-1z M224 137h1v1h-1z M232 133h1v1h-1z M233 134h1v3h-1z M232 137h1v1h-1z M240 133h1v1h-1z M241 134h1v3h-1z M240 137h1v1h-1z M248 133h1v1h-1z M249 134h1v3h-1z M248 137h1v1h-1z M256 133h1v1h-1z M257 134h1v3h-1z M256 137h1v1h-1z M264 133h1v1h-1z M265 134h1v3h-1z M264 137h1v1h-1z M272 133h1v1h-1z M273 134h1v3h-1z M272 137h1v1h-1z M280 133h1v1h-1z M281 134h1v3h-1z M280 137h1v1h-1z M288 133h1v1h-1z M289 134h1v3h-1z M288 137h1v1h-1z M296 133h1v1h-1z M297 134h1v3h-1z M296 137h1v1h-1z M304 133h1v1h-1z M305 134h1v3h-1z M304 137h1v1h-1z M312 133h1v1h-1z M313 134h1v3h-1z M312 137h1v1h-1z M320 133h1v1h-1z M321 134h1v3h-1z M320 137h1v1h-1z M328 133h1v1h-1z M329 134h1v3h-1z M328 137h1v1h-1z M336 133h1v1h-1z M337 134h1v3h-1z M336 137h1v1h-1z M344 133h1v1h-1z M345 134h1v3h-1z M344 137h1v1h-1z M352 133h1v1h-1z M353 134h1v3h-1z M352 137h1v1h-1z M360 133h1v1h-1z M361 134h1v3h-1z M360 137h1v1h-1z M368 133h1v1h-1z M369 134h1v3h-1z M368 137h1v1h-1z M376 133h1v1h-1z M377 134h1v3h-1z M376 137h1v1h-1z M384 133h1v1h-1z M385 134h1v3h-1z M384 137h1v1h-1z M392 133h1v1h-1z M393 134h1v3h-1z M392 137h1v1h-1z M400 133h1v1h-1z M401 134h1v3h-1z M400 137h1v1h-1z M408 133h1v1h-1z M409 134h1v3h-1z M408 137h1v1h-1z M416 133h1v1h-1z M417 134h1v3h-1z M416 137h1v1h-1z M424 133h1v1h-1z M425 134h1v3h-1z M424 137h1v1h-1z M432 133h1v1h-1z M433 134h1v3h-1z M432 137h1v1h-1z M440 133h1v1h-1z M441 134h1v3h-1z M440 137h1v1h-1z M448 133h1v1h-1z M449 134h1v3h-1z M448 137h1v1h-1z M456 133h1v1h-1z M457 134h1v3h-1z M456 137h1v1h-1z M464 133h1v1h-1z M465 134h1v3h-1z M464 137h1v1h-1z M472 133h1v1h-1z M473 134h1v3h-1z M472 137h1v1h-1z M480 133h1v1h-1z M481 134h1v3h-1z M480 137h1v1h-1z M488 133h1v1h-1z M489 134h1v3h-1z M488 137h1v1h-1z M496 133h1v1h-1z M497 134h1v3h-1z M496 137h1v1h-1z M504 133h1v1h-1z M505 134h1v3h-1z M504 137h1v1h-1z M512 133h1v1h-1z M513 134h1v3h-1z M512 137h1v1h-1z M520 133h1v1h-1z M521 134h1v3h-1z M520 137h1v1h-1z M528 133h1v1h-1z M529 134h1v3h-1z M528 137h1v1h-1z M536 133h1v1h-1z M537 134h1v3h-1z M536 137h1v1h-1z M544 133h1v1h-1z M545 134h1v3h-1z M544 137h1v1h-1z M552 133h1v1h-1z M553 134h1v3h-1z M552 137h1v1h-1z M560 133h1v1h-1z M561 134h1v3h-1z M560 137h1v1h-1z M568 133h1v1h-1z M569 134h1v3h-1z M568 137h1v1h-1z M576 133h1v1h-1z M577 134h1v3h-1z M576 137h1v1h-1z M584 133h1v1h-1z M585 134h1v3h-1z M584 137h1v1h-1z M592 133h1v1h-1z M593 134h1v3h-1z M592 137h1v1h-1z M600 133h1v1h-1z M601 134h1v3h-1z M600 137h1v1h-1z M608 133h1v1h-1z M609 134h1v3h-1z M608 137h1v1h-1z M616 133h1v1h-1z M617 134h1v3h-1z M616 137h1v1h-1z M624 133h1v1h-1z M625 134h1v3h-1z M624 137h1v1h-1z M632 133h1v1h-1z M633 134h1v3h-1z M632 137h1v1h-1z M640 133h1v1h-1z M641 134h1v3h-1z M640 137h1v1h-1z M648 133h1v1h-1z M649 134h1v3h-1z M648 137h1v1h-1z M656 133h1v1h-1z M657 134h1v3h-1z M656 137h1v1h-1z M664 133h1v1h-1z M665 134h1v3h-1z M664 137h1v1h-1z M672 133h1v1h-1z M673 134h1v3h-1z M672 137h1v1h-1z M680 133h1v1h-1z M681 134h1v3h-1z M680 137h1v1h-1z M688 133h1v1h-1z M689 134h1v3h-1z M688 137h1v1h-1z M696 133h1v1h-1z M697 134h1v3h-1z M696 137h1v1h-1z M704 133h1v1h-1z M705 134h1v3h-1z M704 137h1v1h-1z M712 133h1v1h-1z M713 134h1v3h-1z M712 137h1v1h-1z M720 133h1v1h-1z M721 134h1v3h-1z M720 137h1v1h-1z M728 133h1v1h-1z M729 134h1v3h-1z M728 137h1v1h-1z M736 133h1v1h-1z M737 134h1v3h-1z M736 137h1v1h-1z M744 133h1v1h-1z M745 134h1v3h-1z M744 137h1v1h-1z M752 133h1v1h-1z M753 134h1v3h-1z M752 137h1v1h-1z M760 133h1v1h-1z M761 134h1v3h-1z M760 137h1v1h-1z M768 133h1v1h-1z M769 134h1v3h-1z M768 137h1v1h-1z M776 133h1v1h-1z M777 134h1v3h-1z M776 137h1v1h-1z M784 133h1v1h-1z M785 134h1v3h-1z M784 137h1v1h-1z M792 133h1v1h-1z M793 134h1v3h-1z M792 137h1v1h-1z M800 133h1v1h-1z M801 134h1v3h-1z M800 137h1v1h-1z M808 133h1v1h-1z M809 134h1v3h-1z M808 137h1v1h-1z M816 133h1v1h-1z M817 134h1v3h-1z M816 137h1v1h-1z M824 133h1v1h-1z M825 134h1v3h-1z M824 137h1v1h-1z M832 133h1v1h-1z M833 134h1v3h-1z M832 137h1v1h-1z M840 133h1v1h-1z M841 134h1v3h-1z M840 137h1v1h-1z M848 133h1v1h-1z M849 134h1v3h-1z M848 137h1v1h-1z M856 133h1v1h-1z M857 134h1v3h-1z M856 137h1v1h-1z M864 133h1v1h-1z M865 134h1v3h-1z M864 137h1v1h-1z M872 133h1v1h-1z M873 134h1v3h-1z M872 137h1v1h-1z M880 133h1v1h-1z M881 134h1v3h-1z M880 137h1v1h-1z M888 133h1v1h-1z M889 134h1v3h-1z M888 137h1v1h-1z M896 133h1v1h-1z M897 134h1v3h-1z M896 137h1v1h-1z M904 133h1v1h-1z M905 134h1v3h-1z M904 137h1v1h-1z M912 133h1v1h-1z M913 134h1v3h-1z M912 137h1v1h-1z M920 133h1v1h-1z M921 134h1v3h-1z M920 137h1v1h-1z M928 133h1v1h-1z M929 134h1v3h-1z M928 137h1v1h-1z M936 133h1v1h-1z M937 134h1v3h-1z M936 137h1v1h-1z M944 133h1v1h-1z M945 134h1v3h-1z M944 137h1v1h-1z" fill="#0c0c78" shape-rendering="crispEdges"/>
<path d="M159 132h1v1h-1z M159 138h1v1h-1z M167 132h1v1h-1z M167 138h1v1h-1z M175 132h1v1h-1z M175 138h1v1h-1z M183 132h1v1h-1z M183 138h1v1h-1z M191 132h1v1h-1z M191 138h1v1h-1z M199 132h1v1h-1z M199 138h1v1h-1z M207 132h1v1h-1z M207 138h1v1h-1z M215 132h1v1h-1z M215 138h1v1h-1z M223 132h1v1h-1z M223 138h1v1h-1z M231 132h1v1h-1z M231 138h1v1h-1z M239 132h1v1h-1z M239 138h1v1h-1z M247 132h1v1h-1z M247 138h1v1h-1z M255 132h1v1h-1z M255 138h1v1h-1z M263 132h1v1h-1z M263 138h1v1h-1z M271 132h1v1h-1z M271 138h1v1h-1z M279 132h1v1h-1z M279 138h1v1h-1z M287 132h1v1h-1z M287 138h1v1h-1z M295 132h1v1h-1z M295 138h1v1h-1z M303 132h1v1h-1z M303 138h1v1h-1z M311 132h1v1h-1z M311 138h1v1h-1z M319 132h1v1h-1z M319 138h1v1h-1z M327 132h1v1h-1z M327 138h1v1h-1z M335 132h1v1h-1z M335 138h1v1h-1z M343 132h1v1h-1z M343 138h1v1h-1z M351 132h1v1h-1z M351 138h1v1h-1z M359 132h1v1h-1z M359 138h1v1h-1z M367 132h1v1h-1z M367 138h1v1h-1z M375 132h1v1h-1z M375 138h1v1h-1z M383 132h1v1h-1z M383 138h1v1h-1z M391 132h1v1h-1z M391 138h1v1h-1z M399 132h1v1h-1z M399 138h1v1h-1z M407 132h1v1h-1z M407 138h1v1h-1z M415 132h1v1h-1z M415 138h1v1h-1z M423 132h1v1h-1z M423 138h1v1h-1z M431 132h1v1h-1z M431 138h1v1h-1z M439 132h1v1h-1z M439 138h1v1h-1z M447 132h1v1h-1z M447 138h1v1h-1z M455 132h1v1h-1z M455 138h1v1h-1z M463 132h1v1h-1z M463 138h1v1h-1z M471 132h1v1h-1z M471 138h1v1h-1z M479 132h1v1h-1z M479 138h1v1h-1z M487 132h1v1h-1z M487 138h1v1h-1z M495 132h1v1h-1z M495 138h1v1h-1z M503 132h1v1h-1z M503 138h1v1h-1z M511 132h1v1h-1z M511 138h1v1h-1z M519 132h1v1h-1z M519 138h1v1h-1z M527 132h1v1h-1z M527 138h1v1h-1z M535 132h1v1h-1z M535 138h1v1h-1z M543 132h1v1h-1z M543 138h1v1h-1z M551 132h1v1h-1z M551 138h1v1h-1z M559 132h1v1h-1z M559 138h1v1h-1z M567 132h1v1h-1z M567 138h1v1h-1z M575 132h1v1h-1z M575 138h1v1h-1z M583 132h1v1h-1z M583 138h1v1h-1z M591 132h1v1h-1z M591 138h1v1h-1z M599 132h1v1h-1z M599 138h1v1h-1z M607 132h1v1h-1z M607 138h1v1h-1z M615 132h1v1h-1z M615 138h1v1h-1z M623 132h1v1h-1z M623 138h1v1h-1z M631 132h1v1h-1z M631 138h1v1h-1z M639 132h1v1h-1z M639 138h1v1h-1z M647 132h1v1h-1z M647 138h1v1h-1z M655 132h1v1h-1z M655 138h1v1h-1z M663 132h1v1h-1z M663 138h1v1h-1z M671 132h1v1h-1z M671 138h1v1h-1z M679 132h1v1h-1z M679 138h1v1h-1z M687 132h1v1h-1z M687 138h1v1h-1z M695 132h1v1h-1z M695 138h1v1h-1z M703 132h1v1h-1z M703 138h1v1h-1z M711 132h1v1h-1z M711 138h1v1h-1z M719 132h1v1h-1z M719 138h1v1h-1z M727 132h1v1h-1z M727 138h1v1h-1z M735 132h1v1h-1z M735 138h1v1h-1z M743 132h1v1h-1z M743 138h1v1h-1z M751 132h1v1h-1z M751 138h1v1h-1z M759 132h1v1h-1z M759 138h1v1h-1z M767 132h1v1h-1z M767 138h1v1h-1z M775 132h1v1h-1z M775 138h1v1h-1z M783 132h1v1h-1z M783 138h1v1h-1z M791 132h1v1h-1z M791 138h1v1h-1z M799 132h1v1h-1z M799 138h1v1h-1z M807 132h1v1h-1z M807 138h1v1h-1z M815 132h1v1h-1z M815 138h1v1h-1z M823 132h1v1h-1z M823 138h1v1h-1z M831 132h1v1h-1z M831 138h1v1h-1z M839 132h1v1h-1z M839 138h1v1h-1z M847 132h1v1h-1z M847 138h1v1h-1z M855 132h1v1h-1z M855 138h1v1h-1z M863 132h1v1h-1z M863 138h1v1h-1z M871 132h1v1h-1z M871 138h1v1h-1z M879 132h1v1h-1z M879 138h1v1h-1z M887 132h1v1h-1z M887 138h1v1h-1z M895 132h1v1h-1z M895 138h1v1h-1z M903 132h1v1h-1z M903 138h1v1h-1z M911 132h1v1h-1z M911 138h1v1h-1z M919 132h1v1h-1z M919 138h1v1h-1z M927 132h1v1h-1z M927 138h1v1h-1z M935 132h1v1h-1z M935 138h1v1h-1z M943 132h1v1h-1z M943 138h1v1h-1z" fill="#0c0c78" opacity="0.55" shape-rendering="crispEdges"/>
<text x="152.4" y="139.7" fill="#0c0c78" font-size="13.0" text-anchor="end">RGS6</text>
<rect x="157" y="151" width="792" height="1" fill="#0c0c78" shape-rendering="crispEdges"/>
<path d="M160 149h1v1h-1z M161 150h1v3h-1z M160 153h1v1h-1z M168 149h1v1h-1z M169 150h1v3h-1z M168 153h1v1h-1z M176 149h1v1h-1z M177 150h1v3h-1z M176 153h1v1h-1z M184 149h1v1h-1z M185 150h1v3h-1z M184 153h1v1h-1z M192 149h1v1h-1z M193 150h1v3h-1z M192 153h1v1h-1z M200 149h1v1h-1z M201 150h1v3h-1z M200 153h1v1h-1z M208 149h1v1h-1z M209 150h1v3h-1z M208 153h1v1h-1z M216 149h1v1h-1z M217 150h1v3h-1z M216 153h1v1h-1z M224 149h1v1h-1z M225 150h1v3h-1z M224 153h1v1h-1z M232 149h1v1h-1z M233 150h1v3h-1z M232 153h1v1h-1z M240 149h1v1h-1z M241 150h1v3h-1z M240 153h1v1h-1z M248 149h1v1h-1z M249 150h1v3h-1z M248 153h1v1h-1z M256 149h1v1h-1z M257 150h1v3h-1z M256 153h1v1h-1z M264 149h1v1h-1z M265 150h1v3h-1z M264 153h1v1h-1z M272 149h1v1h-1z M273 150h1v3h-1z M272 153h1v1h-1z M280 149h1v1h-1z M281 150h1v3h-1z M280 153h1v1h-1z M288 149h1v1h-1z M289 150h1v3h-1z M288 153h1v1h-1z M296 149h1v1h-1z M297 150h1v3h-1z M296 153h1v1h-1z M304 149h1v1h-1z M305 150h1v3h-1z M304 153h1v1h-1z M312 149h1v1h-1z M313 150h1v3h-1z M312 153h1v1h-1z M320 149h1v1h-1z M321 150h1v3h-1z M320 153h1v1h-1z M328 149h1v1h-1z M329 150h1v3h-1z M328 153h1v1h-1z M336 149h1v1h-1z M337 150h1v3h-1z M336 153h1v1h-1z M344 149h1v1h-1z M345 150h1v3h-1z M344 153h1v1h-1z M352 149h1v1h-1z M353 150h1v3h-1z M352 153h1v1h-1z M360 149h1v1h-1z M361 150h1v3h-1z M360 153h1v1h-1z M368 149h1v1h-1z M369 150h1v3h-1z M368 153h1v1h-1z M376 149h1v1h-1z M377 150h1v3h-1z M376 153h1v1h-1z M384 149h1v1h-1z M385 150h1v3h-1z M384 153h1v1h-1z M392 149h1v1h-1z M393 150h1v3h-1z M392 153h1v1h-1z M400 149h1v1h-1z M401 150h1v3h-1z M400 153h1v1h-1z M408 149h1v1h-1z M409 150h1v3h-1z M408 153h1v1h-1z M416 149h1v1h-1z M417 150h1v3h-1z M416 153h1v1h-1z M424 149h1v1h-1z M425 150h1v3h-1z M424 153h1v1h-1z M432 149h1v1h-1z M433 150h1v3h-1z M432 153h1v1h-1z M440 149h1v1h-1z M441 150h1v3h-1z M440 153h1v1h-1z M448 149h1v1h-1z M449 150h1v3h-1z M448 153h1v1h-1z M456 149h1v1h-1z M457 150h1v3h-1z M456 153h1v1h-1z M464 149h1v1h-1z M465 150h1v3h-1z M464 153h1v1h-1z M472 149h1v1h-1z M473 150h1v3h-1z M472 153h1v1h-1z M480 149h1v1h-1z M481 150h1v3h-1z M480 153h1v1h-1z M488 149h1v1h-1z M489 150h1v3h-1z M488 153h1v1h-1z M496 149h1v1h-1z M497 150h1v3h-1z M496 153h1v1h-1z M504 149h1v1h-1z M505 150h1v3h-1z M504 153h1v1h-1z M512 149h1v1h-1z M513 150h1v3h-1z M512 153h1v1h-1z M520 149h1v1h-1z M521 150h1v3h-1z M520 153h1v1h-1z M528 149h1v1h-1z M529 150h1v3h-1z M528 153h1v1h-1z M536 149h1v1h-1z M537 150h1v3h-1z M536 153h1v1h-1z M544 149h1v1h-1z M545 150h1v3h-1z M544 153h1v1h-1z M552 149h1v1h-1z M553 150h1v3h-1z M552 153h1v1h-1z M560 149h1v1h-1z M561 150h1v3h-1z M560 153h1v1h-1z M568 149h1v1h-1z M569 150h1v3h-1z M568 153h1v1h-1z M576 149h1v1h-1z M577 150h1v3h-1z M576 153h1v1h-1z M584 149h1v1h-1z M585 150h1v3h-1z M584 153h1v1h-1z M592 149h1v1h-1z M593 150h1v3h-1z M592 153h1v1h-1z M600 149h1v1h-1z M601 150h1v3h-1z M600 153h1v1h-1z M608 149h1v1h-1z M609 150h1v3h-1z M608 153h1v1h-1z M616 149h1v1h-1z M617 150h1v3h-1z M616 153h1v1h-1z M624 149h1v1h-1z M625 150h1v3h-1z M624 153h1v1h-1z M632 149h1v1h-1z M633 150h1v3h-1z M632 153h1v1h-1z M640 149h1v1h-1z M641 150h1v3h-1z M640 153h1v1h-1z M648 149h1v1h-1z M649 150h1v3h-1z M648 153h1v1h-1z M656 149h1v1h-1z M657 150h1v3h-1z M656 153h1v1h-1z M664 149h1v1h-1z M665 150h1v3h-1z M664 153h1v1h-1z M672 149h1v1h-1z M673 150h1v3h-1z M672 153h1v1h-1z M680 149h1v1h-1z M681 150h1v3h-1z M680 153h1v1h-1z M688 149h1v1h-1z M689 150h1v3h-1z M688 153h1v1h-1z M696 149h1v1h-1z M697 150h1v3h-1z M696 153h1v1h-1z M704 149h1v1h-1z M705 150h1v3h-1z M704 153h1v1h-1z M712 149h1v1h-1z M713 150h1v3h-1z M712 153h1v1h-1z M720 149h1v1h-1z M721 150h1v3h-1z M720 153h1v1h-1z M728 149h1v1h-1z M729 150h1v3h-1z M728 153h1v1h-1z M736 149h1v1h-1z M737 150h1v3h-1z M736 153h1v1h-1z M744 149h1v1h-1z M745 150h1v3h-1z M744 153h1v1h-1z M752 149h1v1h-1z M753 150h1v3h-1z M752 153h1v1h-1z M760 149h1v1h-1z M761 150h1v3h-1z M760 153h1v1h-1z M768 149h1v1h-1z M769 150h1v3h-1z M768 153h1v1h-1z M776 149h1v1h-1z M777 150h1v3h-1z M776 153h1v1h-1z M784 149h1v1h-1z M785 150h1v3h-1z M784 153h1v1h-1z M792 149h1v1h-1z M793 150h1v3h-1z M792 153h1v1h-1z M800 149h1v1h-1z M801 150h1v3h-1z M800 153h1v1h-1z M808 149h1v1h-1z M809 150h1v3h-1z M808 153h1v1h-1z M816 149h1v1h-1z M817 150h1v3h-1z M816 153h1v1h-1z M824 149h1v1h-1z M825 150h1v3h-1z M824 153h1v1h-1z M832 149h1v1h-1z M833 150h1v3h-1z M832 153h1v1h-1z M840 149h1v1h-1z M841 150h1v3h-1z M840 153h1v1h-1z M848 149h1v1h-1z M849 150h1v3h-1z M848 153h1v1h-1z M856 149h1v1h-1z M857 150h1v3h-1z M856 153h1v1h-1z M864 149h1v1h-1z M865 150h1v3h-1z M864 153h1v1h-1z M872 149h1v1h-1z M873 150h1v3h-1z M872 153h1v1h-1z M880 149h1v1h-1z M881 150h1v3h-1z M880 153h1v1h-1z M888 149h1v1h-1z M889 150h1v3h-1z M888 153h1v1h-1z M896 149h1v1h-1z M897 150h1v3h-1z M896 153h1v1h-1z M904 149h1v1h-1z M905 150h1v3h-1z M904 153h1v1h-1z M912 149h1v1h-1z M913 150h1v3h-1z M912 153h1v1h-1z M920 149h1v1h-1z M921 150h1v3h-1z M920 153h1v1h-1z M928 149h1v1h-1z M929 150h1v3h-1z M928 153h1v1h-1z M936 149h1v1h-1z M937 150h1v3h-1z M936 153h1v1h-1z M944 149h1v1h-1z M945 150h1v3h-1z M944 153h1v1h-1z" fill="#0c0c78" shape-rendering="crispEdges"/>
<path d="M159 148h1v1h-1z M159 154h1v1h-1z M167 148h1v1h-1z M167 154h1v1h-1z M175 148h1v1h-1z M175 154h1v1h-1z M183 148h1v1h-1z M183 154h1v1h-1z M191 148h1v1h-1z M191 154h1v1h-1z M199 148h1v1h-1z M199 154h1v1h-1z M207 148h1v1h-1z M207 154h1v1h-1z M215 148h1v1h-1z M215 154h1v1h-1z M223 148h1v1h-1z M223 154h1v1h-1z M231 148h1v1h-1z M231 154h1v1h-1z M239 148h1v1h-1z M239 154h1v1h-1z M247 148h1v1h-1z M247 154h1v1h-1z M255 148h1v1h-1z M255 154h1v1h-1z M263 148h1v1h-1z M263 154h1v1h-1z M271 148h1v1h-1z M271 154h1v1h-1z M279 148h1v1h-1z M279 154h1v1h-1z M287 148h1v1h-1z M287 154h1v1h-1z M295 148h1v1h-1z M295 154h1v1h-1z M303 148h1v1h-1z M303 154h1v1h-1z M311 148h1v1h-1z M311 154h1v1h-1z M319 148h1v1h-1z M319 154h1v1h-1z M327 148h1v1h-1z M327 154h1v1h-1z M335 148h1v1h-1z M335 154h1v1h-1z M343 148h1v1h-1z M343 154h1v1h-1z M351 148h1v1h-1z M351 154h1v1h-1z M359 148h1v1h-1z M359 154h1v1h-1z M367 148h1v1h-1z M367 154h1v1h-1z M375 148h1v1h-1z M375 154h1v1h-1z M383 148h1v1h-1z M383 154h1v1h-1z M391 148h1v1h-1z M391 154h1v1h-1z M399 148h1v1h-1z M399 154h1v1h-1z M407 148h1v1h-1z M407 154h1v1h-1z M415 148h1v1h-1z M415 154h1v1h-1z M423 148h1v1h-1z M423 154h1v1h-1z M431 148h1v1h-1z M431 154h1v1h-1z M439 148h1v1h-1z M439 154h1v1h-1z M447 148h1v1h-1z M447 154h1v1h-1z M455 148h1v1h-1z M455 154h1v1h-1z M463 148h1v1h-1z M463 154h1v1h-1z M471 148h1v1h-1z M471 154h1v1h-1z M479 148h1v1h-1z M479 154h1v1h-1z M487 148h1v1h-1z M487 154h1v1h-1z M495 148h1v1h-1z M495 154h1v1h-1z M503 148h1v1h-1z M503 154h1v1h-1z M511 148h1v1h-1z M511 154h1v1h-1z M519 148h1v1h-1z M519 154h1v1h-1z M527 148h1v1h-1z M527 154h1v1h-1z M535 148h1v1h-1z M535 154h1v1h-1z M543 148h1v1h-1z M543 154h1v1h-1z M551 148h1v1h-1z M551 154h1v1h-1z M559 148h1v1h-1z M559 154h1v1h-1z M567 148h1v1h-1z M567 154h1v1h-1z M575 148h1v1h-1z M575 154h1v1h-1z M583 148h1v1h-1z M583 154h1v1h-1z M591 148h1v1h-1z M591 154h1v1h-1z M599 148h1v1h-1z M599 154h1v1h-1z M607 148h1v1h-1z M607 154h1v1h-1z M615 148h1v1h-1z M615 154h1v1h-1z M623 148h1v1h-1z M623 154h1v1h-1z M631 148h1v1h-1z M631 154h1v1h-1z M639 148h1v1h-1z M639 154h1v1h-1z M647 148h1v1h-1z M647 154h1v1h-1z M655 148h1v1h-1z M655 154h1v1h-1z M663 148h1v1h-1z M663 154h1v1h-1z M671 148h1v1h-1z M671 154h1v1h-1z M679 148h1v1h-1z M679 154h1v1h-1z M687 148h1v1h-1z M687 154h1v1h-1z M695 148h1v1h-1z M695 154h1v1h-1z M703 148h1v1h-1z M703 154h1v1h-1z M711 148h1v1h-1z M711 154h1v1h-1z M719 148h1v1h-1z M719 154h1v1h-1z M727 148h1v1h-1z M727 154h1v1h-1z M735 148h1v1h-1z M735 154h1v1h-1z M743 148h1v1h-1z M743 154h1v1h-1z M751 148h1v1h-1z M751 154h1v1h-1z M759 148h1v1h-1z M759 154h1v1h-1z M767 148h1v1h-1z M767 154h1v1h-1z M775 148h1v1h-1z M775 154h1v1h-1z M783 148h1v1h-1z M783 154h1v1h-1z M791 148h1v1h-1z M791 154h1v1h-1z M799 148h1v1h-1z M799 154h1v1h-1z M807 148h1v1h-1z M807 154h1v1h-1z M815 148h1v1h-1z M815 154h1v1h-1z M823 148h1v1h-1z M823 154h1v1h-1z M831 148h1v1h-1z M831 154h1v1h-1z M839 148h1v1h-1z M839 154h1v1h-1z M847 148h1v1h-1z M847 154h1v1h-1z M855 148h1v1h-1z M855 154h1v1h-1z M863 148h1v1h-1z M863 154h1v1h-1z M871 148h1v1h-1z M871 154h1v1h-1z M879 148h1v1h-1z M879 154h1v1h-1z M887 148h1v1h-1z M887 154h1v1h-1z M895 148h1v1h-1z M895 154h1v1h-1z M903 148h1v1h-1z M903 154h1v1h-1z M911 148h1v1h-1z M911 154h1v1h-1z M919 148h1v1h-1z M919 154h1v1h-1z M927 148h1v1h-1z M927 154h1v1h-1z M935 148h1v1h-1z M935 154h1v1h-1z M943 148h1v1h-1z M943 154h1v1h-1z" fill="#0c0c78" opacity="0.55" shape-rendering="crispEdges"/>
<text x="152.4" y="155.7" fill="#0c0c78" font-size="13.0" text-anchor="end">RGS6</text>
<rect x="157" y="167" width="792" height="1" fill="#0c0c78" shape-rendering="crispEdges"/>
<path d="M160 165h1v1h-1z M161 166h1v3h-1z M160 169h1v1h-1z M168 165h1v1h-1z M169 166h1v3h-1z M168 169h1v1h-1z M176 165h1v1h-1z M177 166h1v3h-1z M176 169h1v1h-1z M184 165h1v1h-1z M185 166h1v3h-1z M184 169h1v1h-1z M192 165h1v1h-1z M193 166h1v3h-1z M192 169h1v1h-1z M200 165h1v1h-1z M201 166h1v3h-1z M200 169h1v1h-1z M208 165h1v1h-1z M209 166h1v3h-1z M208 169h1v1h-1z M216 165h1v1h-1z M217 166h1v3h-1z M216 169h1v1h-1z M224 165h1v1h-1z M225 166h1v3h-1z M224 169h1v1h-1z M232 165h1v1h-1z M233 166h1v3h-1z M232 169h1v1h-1z M240 165h1v1h-1z M241 166h1v3h-1z M240 169h1v1h-1z M248 165h1v1h-1z M249 166h1v3h-1z M248 169h1v1h-1z M256 165h1v1h-1z M257 166h1v3h-1z M256 169h1v1h-1z M264 165h1v1h-1z M265 166h1v3h-1z M264 169h1v1h-1z M272 165h1v1h-1z M273 166h1v3h-1z M272 169h1v1h-1z M280 165h1v1h-1z M281 166h1v3h-1z M280 169h1v1h-1z M288 165h1v1h-1z M289 166h1v3h-1z M288 169h1v1h-1z M296 165h1v1h-1z M297 166h1v3h-1z M296 169h1v1h-1z M304 165h1v1h-1z M305 166h1v3h-1z M304 169h1v1h-1z M312 165h1v1h-1z M313 166h1v3h-1z M312 169h1v1h-1z M320 165h1v1h-1z M321 166h1v3h-1z M320 169h1v1h-1z M328 165h1v1h-1z M329 166h1v3h-1z M328 169h1v1h-1z M336 165h1v1h-1z M337 166h1v3h-1z M336 169h1v1h-1z M344 165h1v1h-1z M345 166h1v3h-1z M344 169h1v1h-1z M352 165h1v1h-1z M353 166h1v3h-1z M352 169h1v1h-1z M360 165h1v1h-1z M361 166h1v3h-1z M360 169h1v1h-1z M368 165h1v1h-1z M369 166h1v3h-1z M368 169h1v1h-1z M376 165h1v1h-1z M377 166h1v3h-1z M376 169h1v1h-1z M384 165h1v1h-1z M385 166h1v3h-1z M384 169h1v1h-1z M392 165h1v1h-1z M393 166h1v3h-1z M392 169h1v1h-1z M400 165h1v1h-1z M401 166h1v3h-1z M400 169h1v1h-1z M408 165h1v1h-1z M409 166h1v3h-1z M408 169h1v1h-1z M416 165h1v1h-1z M417 166h1v3h-1z M416 169h1v1h-1z M424 165h1v1h-1z M425 166h1v3h-1z M424 169h1v1h-1z M432 165h1v1h-1z M433 166h1v3h-1z M432 169h1v1h-1z M440 165h1v1h-1z M441 166h1v3h-1z M440 169h1v1h-1z M448 165h1v1h-1z M449 166h1v3h-1z M448 169h1v1h-1z M456 165h1v1h-1z M457 166h1v3h-1z M456 169h1v1h-1z M464 165h1v1h-1z M465 166h1v3h-1z M464 169h1v1h-1z M472 165h1v1h-1z M473 166h1v3h-1z M472 169h1v1h-1z M480 165h1v1h-1z M481 166h1v3h-1z M480 169h1v1h-1z M488 165h1v1h-1z M489 166h1v3h-1z M488 169h1v1h-1z M496 165h1v1h-1z M497 166h1v3h-1z M496 169h1v1h-1z M504 165h1v1h-1z M505 166h1v3h-1z M504 169h1v1h-1z M512 165h1v1h-1z M513 166h1v3h-1z M512 169h1v1h-1z M520 165h1v1h-1z M521 166h1v3h-1z M520 169h1v1h-1z M528 165h1v1h-1z M529 166h1v3h-1z M528 169h1v1h-1z M536 165h1v1h-1z M537 166h1v3h-1z M536 169h1v1h-1z M544 165h1v1h-1z M545 166h1v3h-1z M544 169h1v1h-1z M552 165h1v1h-1z M553 166h1v3h-1z M552 169h1v1h-1z M560 165h1v1h-1z M561 166h1v3h-1z M560 169h1v1h-1z M568 165h1v1h-1z M569 166h1v3h-1z M568 169h1v1h-1z M576 165h1v1h-1z M577 166h1v3h-1z M576 169h1v1h-1z M584 165h1v1h-1z M585 166h1v3h-1z M584 169h1v1h-1z M592 165h1v1h-1z M593 166h1v3h-1z M592 169h1v1h-1z M600 165h1v1h-1z M601 166h1v3h-1z M600 169h1v1h-1z M608 165h1v1h-1z M609 166h1v3h-1z M608 169h1v1h-1z M616 165h1v1h-1z M617 166h1v3h-1z M616 169h1v1h-1z M624 165h1v1h-1z M625 166h1v3h-1z M624 169h1v1h-1z M632 165h1v1h-1z M633 166h1v3h-1z M632 169h1v1h-1z M640 165h1v1h-1z M641 166h1v3h-1z M640 169h1v1h-1z M648 165h1v1h-1z M649 166h1v3h-1z M648 169h1v1h-1z M656 165h1v1h-1z M657 166h1v3h-1z M656 169h1v1h-1z M664 165h1v1h-1z M665 166h1v3h-1z M664 169h1v1h-1z M672 165h1v1h-1z M673 166h1v3h-1z M672 169h1v1h-1z M680 165h1v1h-1z M681 166h1v3h-1z M680 169h1v1h-1z M688 165h1v1h-1z M689 166h1v3h-1z M688 169h1v1h-1z M696 165h1v1h-1z M697 166h1v3h-1z M696 169h1v1h-1z M704 165h1v1h-1z M705 166h1v3h-1z M704 169h1v1h-1z M712 165h1v1h-1z M713 166h1v3h-1z M712 169h1v1h-1z M720 165h1v1h-1z M721 166h1v3h-1z M720 169h1v1h-1z M728 165h1v1h-1z M729 166h1v3h-1z M728 169h1v1h-1z M736 165h1v1h-1z M737 166h1v3h-1z M736 169h1v1h-1z M744 165h1v1h-1z M745 166h1v3h-1z M744 169h1v1h-1z M752 165h1v1h-1z M753 166h1v3h-1z M752 169h1v1h-1z M760 165h1v1h-1z M761 166h1v3h-1z M760 169h1v1h-1z M768 165h1v1h-1z M769 166h1v3h-1z M768 169h1v1h-1z M776 165h1v1h-1z M777 166h1v3h-1z M776 169h1v1h-1z M784 165h1v1h-1z M785 166h1v3h-1z M784 169h1v1h-1z M792 165h1v1h-1z M793 166h1v3h-1z M792 169h1v1h-1z M800 165h1v1h-1z M801 166h1v3h-1z M800 169h1v1h-1z M808 165h1v1h-1z M809 166h1v3h-1z M808 169h1v1h-1z M816 165h1v1h-1z M817 166h1v3h-1z M816 169h1v1h-1z M824 165h1v1h-1z M825 166h1v3h-1z M824 169h1v1h-1z M832 165h1v1h-1z M833 166h1v3h-1z M832 169h1v1h-1z M840 165h1v1h-1z M841 166h1v3h-1z M840 169h1v1h-1z M848 165h1v1h-1z M849 166h1v3h-1z M848 169h1v1h-1z M856 165h1v1h-1z M857 166h1v3h-1z M856 169h1v1h-1z M864 165h1v1h-1z M865 166h1v3h-1z M864 169h1v1h-1z M872 165h1v1h-1z M873 166h1v3h-1z M872 169h1v1h-1z M880 165h1v1h-1z M881 166h1v3h-1z M880 169h1v1h-1z M888 165h1v1h-1z M889 166h1v3h-1z M888 169h1v1h-1z M896 165h1v1h-1z M897 166h1v3h-1z M896 169h1v1h-1z M904 165h1v1h-1z M905 166h1v3h-1z M904 169h1v1h-1z M912 165h1v1h-1z M913 166h1v3h-1z M912 169h1v1h-1z M920 165h1v1h-1z M921 166h1v3h-1z M920 169h1v1h-1z M928 165h1v1h-1z M929 166h1v3h-1z M928 169h1v1h-1z M936 165h1v1h-1z M937 166h1v3h-1z M936 169h1v1h-1z M944 165h1v1h-1z M945 166h1v3h-1z M944 169h1v1h-1z" fill="#0c0c78" shape-rendering="crispEdges"/>
<path d="M159 164h1v1h-1z M159 170h1v1h-1z M167 164h1v1h-1z M167 170h1v1h-1z M175 164h1v1h-1z M175 170h1v1h-1z M183 164h1v1h-1z M183 170h1v1h-1z M191 164h1v1h-1z M191 170h1v1h-1z M199 164h1v1h-1z M199 170h1v1h-1z M207 164h1v1h-1z M207 170h1v1h-1z M215 164h1v1h-1z M215 170h1v1h-1z M223 164h1v1h-1z M223 170h1v1h-1z M231 164h1v1h-1z M231 170h1v1h-1z M239 164h1v1h-1z M239 170h1v1h-1z M247 164h1v1h-1z M247 170h1v1h-1z M255 164h1v1h-1z M255 170h1v1h-1z M263 164h1v1h-1z M263 170h1v1h-1z M271 164h1v1h-1z M271 170h1v1h-1z M279 164h1v1h-1z M279 170h1v1h-1z M287 164h1v1h-1z M287 170h1v1h-1z M295 164h1v1h-1z M295 170h1v1h-1z M303 164h1v1h-1z M303 170h1v1h-1z M311 164h1v1h-1z M311 170h1v1h-1z M319 164h1v1h-1z M319 170h1v1h-1z M327 164h1v1h-1z M327 170h1v1h-1z M335 164h1v1h-1z M335 170h1v1h-1z M343 164h1v1h-1z M343 170h1v1h-1z M351 164h1v1h-1z M351 170h1v1h-1z M359 164h1v1h-1z M359 170h1v1h-1z M367 164h1v1h-1z M367 170h1v1h-1z M375 164h1v1h-1z M375 170h1v1h-1z M383 164h1v1h-1z M383 170h1v1h-1z M391 164h1v1h-1z M391 170h1v1h-1z M399 164h1v1h-1z M399 170h1v1h-1z M407 164h1v1h-1z M407 170h1v1h-1z M415 164h1v1h-1z M415 170h1v1h-1z M423 164h1v1h-1z M423 170h1v1h-1z M431 164h1v1h-1z M431 170h1v1h-1z M439 164h1v1h-1z M439 170h1v1h-1z M447 164h1v1h-1z M447 170h1v1h-1z M455 164h1v1h-1z M455 170h1v1h-1z M463 164h1v1h-1z M463 170h1v1h-1z M471 164h1v1h-1z M471 170h1v1h-1z M479 164h1v1h-1z M479 170h1v1h-1z M487 164h1v1h-1z M487 170h1v1h-1z M495 164h1v1h-1z M495 170h1v1h-1z M503 164h1v1h-1z M503 170h1v1h-1z M511 164h1v1h-1z M511 170h1v1h-1z M519 164h1v1h-1z M519 170h1v1h-1z M527 164h1v1h-1z M527 170h1v1h-1z M535 164h1v1h-1z M535 170h1v1h-1z M543 164h1v1h-1z M543 170h1v1h-1z M551 164h1v1h-1z M551 170h1v1h-1z M559 164h1v1h-1z M559 170h1v1h-1z M567 164h1v1h-1z M567 170h1v1h-1z M575 164h1v1h-1z M575 170h1v1h-1z M583 164h1v1h-1z M583 170h1v1h-1z M591 164h1v1h-1z M591 170h1v1h-1z M599 164h1v1h-1z M599 170h1v1h-1z M607 164h1v1h-1z M607 170h1v1h-1z M615 164h1v1h-1z M615 170h1v1h-1z M623 164h1v1h-1z M623 170h1v1h-1z M631 164h1v1h-1z M631 170h1v1h-1z M639 164h1v1h-1z M639 170h1v1h-1z M647 164h1v1h-1z M647 170h1v1h-1z M655 164h1v1h-1z M655 170h1v1h-1z M663 164h1v1h-1z M663 170h1v1h-1z M671 164h1v1h-1z M671 170h1v1h-1z M679 164h1v1h-1z M679 170h1v1h-1z M687 164h1v1h-1z M687 170h1v1h-1z M695 164h1v1h-1z M695 170h1v1h-1z M703 164h1v1h-1z M703 170h1v1h-1z M711 164h1v1h-1z M711 170h1v1h-1z M719 164h1v1h-1z M719 170h1v1h-1z M727 164h1v1h-1z M727 170h1v1h-1z M735 164h1v1h-1z M735 170h1v1h-1z M743 164h1v1h-1z M743 170h1v1h-1z M751 164h1v1h-1z M751 170h1v1h-1z M759 164h1v1h-1z M759 170h1v1h-1z M767 164h1v1h-1z M767 170h1v1h-1z M775 164h1v1h-1z M775 170h1v1h-1z M783 164h1v1h-1z M783 170h1v1h-1z M791 164h1v1h-1z M791 170h1v1h-1z M799 164h1v1h-1z M799 170h1v1h-1z M807 164h1v1h-1z M807 170h1v1h-1z M815 164h1v1h-1z M815 170h1v1h-1z M823 164h1v1h-1z M823 170h1v1h-1z M831 164h1v1h-1z M831 170h1v1h-1z M839 164h1v1h-1z M839 170h1v1h-1z M847 164h1v1h-1z M847 170h1v1h-1z M855 164h1v1h-1z M855 170h1v1h-1z M863 164h1v1h-1z M863 170h1v1h-1z M871 164h1v1h-1z M871 170h1v1h-1z M879 164h1v1h-1z M879 170h1v1h-1z M887 164h1v1h-1z M887 170h1v1h-1z M895 164h1v1h-1z M895 170h1v1h-1z M903 164h1v1h-1z M903 170h1v1h-1z M911 164h1v1h-1z M911 170h1v1h-1z M919 164h1v1h-1z M919 170h1v1h-1z M927 164h1v1h-1z M927 170h1v1h-1z M935 164h1v1h-1z M935 170h1v1h-1z M943 164h1v1h-1z M943 170h1v1h-1z" fill="#0c0c78" opacity="0.55" shape-rendering="crispEdges"/>
<text x="152.4" y="171.7" fill="#0c0c78" font-size="13.0" text-anchor="end">RGS6</text>
<rect x="157" y="183" width="792" height="1" fill="#0c0c78" shape-rendering="crispEdges"/>
<path d="M160 181h1v1h-1z M161 182h1v3h-1z M160 185h1v1h-1z M168 181h1v1h-1z M169 182h1v3h-1z M168 185h1v1h-1z M176 181h1v1h-1z M177 182h1v3h-1z M176 185h1v1h-1z M184 181h1v1h-1z M185 182h1v3h-1z M184 185h1v1h-1z M192 181h1v1h-1z M193 182h1v3h-1z M192 185h1v1h-1z M200 181h1v1h-1z M201 182h1v3h-1z M200 185h1v1h-1z M208 181h1v1h-1z M209 182h1v3h-1z M208 185h1v1h-1z M216 181h1v1h-1z M217 182h1v3h-1z M216 185h1v1h-1z M224 181h1v1h-1z M225 182h1v3h-1z M224 185h1v1h-1z M232 181h1v1h-1z M233 182h1v3h-1z M232 185h1v1h-1z M240 181h1v1h-1z M241 182h1v3h-1z M240 185h1v1h-1z M248 181h1v1h-1z M249 182h1v3h-1z M248 185h1v1h-1z M256 181h1v1h-1z M257 182h1v3h-1z M256 185h1v1h-1z M264 181h1v1h-1z M265 182h1v3h-1z M264 185h1v1h-1z M272 181h1v1h-1z M273 182h1v3h-1z M272 185h1v1h-1z M280 181h1v1h-1z M281 182h1v3h-1z M280 185h1v1h-1z M288 181h1v1h-1z M289 182h1v3h-1z M288 185h1v1h-1z M296 181h1v1h-1z M297 182h1v3h-1z M296 185h1v1h-1z M304 181h1v1h-1z M305 182h1v3h-1z M304 185h1v1h-1z M312 181h1v1h-1z M313 182h1v3h-1z M312 185h1v1h-1z M320 181h1v1h-1z M321 182h1v3h-1z M320 185h1v1h-1z M328 181h1v1h-1z M329 182h1v3h-1z M328 185h1v1h-1z M336 181h1v1h-1z M337 182h1v3h-1z M336 185h1v1h-1z M344 181h1v1h-1z M345 182h1v3h-1z M344 185h1v1h-1z M352 181h1v1h-1z M353 182h1v3h-1z M352 185h1v1h-1z M360 181h1v1h-1z M361 182h1v3h-1z M360 185h1v1h-1z M368 181h1v1h-1z M369 182h1v3h-1z M368 185h1v1h-1z M376 181h1v1h-1z M377 182h1v3h-1z M376 185h1v1h-1z M384 181h1v1h-1z M385 182h1v3h-1z M384 185h1v1h-1z M392 181h1v1h-1z M393 182h1v3h-1z M392 185h1v1h-1z M400 181h1v1h-1z M401 182h1v3h-1z M400 185h1v1h-1z M408 181h1v1h-1z M409 182h1v3h-1z M408 185h1v1h-1z M416 181h1v1h-1z M417 182h1v3h-1z M416 185h1v1h-1z M424 181h1v1h-1z M425 182h1v3h-1z M424 185h1v1h-1z M432 181h1v1h-1z M433 182h1v3h-1z M432 185h1v1h-1z M440 181h1v1h-1z M441 182h1v3h-1z M440 185h1v1h-1z M448 181h1v1h-1z M449 182h1v3h-1z M448 185h1v1h-1z M456 181h1v1h-1z M457 182h1v3h-1z M456 185h1v1h-1z M464 181h1v1h-1z M465 182h1v3h-1z M464 185h1v1h-1z M472 181h1v1h-1z M473 182h1v3h-1z M472 185h1v1h-1z M480 181h1v1h-1z M481 182h1v3h-1z M480 185h1v1h-1z M488 181h1v1h-1z M489 182h1v3h-1z M488 185h1v1h-1z M496 181h1v1h-1z M497 182h1v3h-1z M496 185h1v1h-1z M504 181h1v1h-1z M505 182h1v3h-1z M504 185h1v1h-1z M512 181h1v1h-1z M513 182h1v3h-1z M512 185h1v1h-1z M520 181h1v1h-1z M521 182h1v3h-1z M520 185h1v1h-1z M528 181h1v1h-1z M529 182h1v3h-1z M528 185h1v1h-1z M536 181h1v1h-1z M537 182h1v3h-1z M536 185h1v1h-1z M544 181h1v1h-1z M545 182h1v3h-1z M544 185h1v1h-1z M552 181h1v1h-1z M553 182h1v3h-1z M552 185h1v1h-1z M560 181h1v1h-1z M561 182h1v3h-1z M560 185h1v1h-1z M568 181h1v1h-1z M569 182h1v3h-1z M568 185h1v1h-1z M576 181h1v1h-1z M577 182h1v3h-1z M576 185h1v1h-1z M584 181h1v1h-1z M585 182h1v3h-1z M584 185h1v1h-1z M592 181h1v1h-1z M593 182h1v3h-1z M592 185h1v1h-1z M600 181h1v1h-1z M601 182h1v3h-1z M600 185h1v1h-1z M608 181h1v1h-1z M609 182h1v3h-1z M608 185h1v1h-1z M616 181h1v1h-1z M617 182h1v3h-1z M616 185h1v1h-1z M624 181h1v1h-1z M625 182h1v3h-1z M624 185h1v1h-1z M632 181h1v1h-1z M633 182h1v3h-1z M632 185h1v1h-1z M640 181h1v1h-1z M641 182h1v3h-1z M640 185h1v1h-1z M648 181h1v1h-1z M649 182h1v3h-1z M648 185h1v1h-1z M656 181h1v1h-1z M657 182h1v3h-1z M656 185h1v1h-1z M664 181h1v1h-1z M665 182h1v3h-1z M664 185h1v1h-1z M672 181h1v1h-1z M673 182h1v3h-1z M672 185h1v1h-1z M680 181h1v1h-1z M681 182h1v3h-1z M680 185h1v1h-1z M688 181h1v1h-1z M689 182h1v3h-1z M688 185h1v1h-1z M696 181h1v1h-1z M697 182h1v3h-1z M696 185h1v1h-1z M704 181h1v1h-1z M705 182h1v3h-1z M704 185h1v1h-1z M712 181h1v1h-1z M713 182h1v3h-1z M712 185h1v1h-1z M720 181h1v1h-1z M721 182h1v3h-1z M720 185h1v1h-1z M728 181h1v1h-1z M729 182h1v3h-1z M728 185h1v1h-1z M736 181h1v1h-1z M737 182h1v3h-1z M736 185h1v1h-1z M744 181h1v1h-1z M745 182h1v3h-1z M744 185h1v1h-1z M752 181h1v1h-1z M753 182h1v3h-1z M752 185h1v1h-1z M760 181h1v1h-1z M761 182h1v3h-1z M760 185h1v1h-1z M768 181h1v1h-1z M769 182h1v3h-1z M768 185h1v1h-1z M776 181h1v1h-1z M777 182h1v3h-1z M776 185h1v1h-1z M784 181h1v1h-1z M785 182h1v3h-1z M784 185h1v1h-1z M792 181h1v1h-1z M793 182h1v3h-1z M792 185h1v1h-1z M800 181h1v1h-1z M801 182h1v3h-1z M800 185h1v1h-1z M808 181h1v1h-1z M809 182h1v3h-1z M808 185h1v1h-1z M816 181h1v1h-1z M817 182h1v3h-1z M816 185h1v1h-1z M824 181h1v1h-1z M825 182h1v3h-1z M824 185h1v1h-1z M832 181h1v1h-1z M833 182h1v3h-1z M832 185h1v1h-1z M840 181h1v1h-1z M841 182h1v3h-1z M840 185h1v1h-1z M848 181h1v1h-1z M849 182h1v3h-1z M848 185h1v1h-1z M856 181h1v1h-1z M857 182h1v3h-1z M856 185h1v1h-1z M864 181h1v1h-1z M865 182h1v3h-1z M864 185h1v1h-1z M872 181h1v1h-1z M873 182h1v3h-1z M872 185h1v1h-1z M880 181h1v1h-1z M881 182h1v3h-1z M880 185h1v1h-1z M888 181h1v1h-1z M889 182h1v3h-1z M888 185h1v1h-1z M896 181h1v1h-1z M897 182h1v3h-1z M896 185h1v1h-1z M904 181h1v1h-1z M905 182h1v3h-1z M904 185h1v1h-1z M912 181h1v1h-1z M913 182h1v3h-1z M912 185h1v1h-1z M920 181h1v1h-1z M921 182h1v3h-1z M920 185h1v1h-1z M928 181h1v1h-1z M929 182h1v3h-1z M928 185h1v1h-1z M936 181h1v1h-1z M937 182h1v3h-1z M936 185h1v1h-1z M944 181h1v1h-1z M945 182h1v3h-1z M944 185h1v1h-1z" fill="#0c0c78" shape-rendering="crispEdges"/>
<path d="M159 180h1v1h-1z M159 186h1v1h-1z M167 180h1v1h-1z M167 186h1v1h-1z M175 180h1v1h-1z M175 186h1v1h-1z M183 180h1v1h-1z M183 186h1v1h-1z M191 180h1v1h-1z M191 186h1v1h-1z M199 180h1v1h-1z M199 186h1v1h-1z M207 180h1v1h-1z M207 186h1v1h-1z M215 180h1v1h-1z M215 186h1v1h-1z M223 180h1v1h-1z M223 186h1v1h-1z M231 180h1v1h-1z M231 186h1v1h-1z M239 180h1v1h-1z M239 186h1v1h-1z M247 180h1v1h-1z M247 186h1v1h-1z M255 180h1v1h-1z M255 186h1v1h-1z M263 180h1v1h-1z M263 186h1v1h-1z M271 180h1v1h-1z M271 186h1v1h-1z M279 180h1v1h-1z M279 186h1v1h-1z M287 180h1v1h-1z M287 186h1v1h-1z M295 180h1v1h-1z M295 186h1v1h-1z M303 180h1v1h-1z M303 186h1v1h-1z M311 180h1v1h-1z M311 186h1v1h-1z M319 180h1v1h-1z M319 186h1v1h-1z M327 180h1v1h-1z M327 186h1v1h-1z M335 180h1v1h-1z M335 186h1v1h-1z M343 180h1v1h-1z M343 186h1v1h-1z M351 180h1v1h-1z M351 186h1v1h-1z M359 180h1v1h-1z M359 186h1v1h-1z M367 180h1v1h-1z M367 186h1v1h-1z M375 180h1v1h-1z M375 186h1v1h-1z M383 180h1v1h-1z M383 186h1v1h-1z M391 180h1v1h-1z M391 186h1v1h-1z M399 180h1v1h-1z M399 186h1v1h-1z M407 180h1v1h-1z M407 186h1v1h-1z M415 180h1v1h-1z M415 186h1v1h-1z M423 180h1v1h-1z M423 186h1v1h-1z M431 180h1v1h-1z M431 186h1v1h-1z M439 180h1v1h-1z M439 186h1v1h-1z M447 180h1v1h-1z M447 186h1v1h-1z M455 180h1v1h-1z M455 186h1v1h-1z M463 180h1v1h-1z M463 186h1v1h-1z M471 180h1v1h-1z M471 186h1v1h-1z M479 180h1v1h-1z M479 186h1v1h-1z M487 180h1v1h-1z M487 186h1v1h-1z M495 180h1v1h-1z M495 186h1v1h-1z M503 180h1v1h-1z M503 186h1v1h-1z M511 180h1v1h-1z M511 186h1v1h-1z M519 180h1v1h-1z M519 186h1v1h-1z M527 180h1v1h-1z M527 186h1v1h-1z M535 180h1v1h-1z M535 186h1v1h-1z M543 180h1v1h-1z M543 186h1v1h-1z M551 180h1v1h-1z M551 186h1v1h-1z M559 180h1v1h-1z M559 186h1v1h-1z M567 180h1v1h-1z M567 186h1v1h-1z M575 180h1v1h-1z M575 186h1v1h-1z M583 180h1v1h-1z M583 186h1v1h-1z M591 180h1v1h-1z M591 186h1v1h-1z M599 180h1v1h-1z M599 186h1v1h-1z M607 180h1v1h-1z M607 186h1v1h-1z M615 180h1v1h-1z M615 186h1v1h-1z M623 180h1v1h-1z M623 186h1v1h-1z M631 180h1v1h-1z M631 186h1v1h-1z M639 180h1v1h-1z M639 186h1v1h-1z M647 180h1v1h-1z M647 186h1v1h-1z M655 180h1v1h-1z M655 186h1v1h-1z M663 180h1v1h-1z M663 186h1v1h-1z M671 180h1v1h-1z M671 186h1v1h-1z M679 180h1v1h-1z M679 186h1v1h-1z M687 180h1v1h-1z M687 186h1v1h-1z M695 180h1v1h-1z M695 186h1v1h-1z M703 180h1v1h-1z M703 186h1v1h-1z M711 180h1v1h-1z M711 186h1v1h-1z M719 180h1v1h-1z M719 186h1v1h-1z M727 180h1v1h-1z M727 186h1v1h-1z M735 180h1v1h-1z M735 186h1v1h-1z M743 180h1v1h-1z M743 186h1v1h-1z M751 180h1v1h-1z M751 186h1v1h-1z M759 180h1v1h-1z M759 186h1v1h-1z M767 180h1v1h-1z M767 186h1v1h-1z M775 180h1v1h-1z M775 186h1v1h-1z M783 180h1v1h-1z M783 186h1v1h-1z M791 180h1v1h-1z M791 186h1v1h-1z M799 180h1v1h-1z M799 186h1v1h-1z M807 180h1v1h-1z M807 186h1v1h-1z M815 180h1v1h-1z M815 186h1v1h-1z M823 180h1v1h-1z M823 186h1v1h-1z M831 180h1v1h-1z M831 186h1v1h-1z M839 180h1v1h-1z M839 186h1v1h-1z M847 180h1v1h-1z M847 186h1v1h-1z M855 180h1v1h-1z M855 186h1v1h-1z M863 180h1v1h-1z M863 186h1v1h-1z M871 180h1v1h-1z M871 186h1v1h-1z M879 180h1v1h-1z M879 186h1v1h-1z M887 180h1v1h-1z M887 186h1v1h-1z M895 180h1v1h-1z M895 186h1v1h-1z M903 180h1v1h-1z M903 186h1v1h-1z M911 180h1v1h-1z M911 186h1v1h-1z M919 180h1v1h-1z M919 186h1v1h-1z M927 180h1v1h-1z M927 186h1v1h-1z M935 180h1v1h-1z M935 186h1v1h-1z M943 180h1v1h-1z M943 186h1v1h-1z" fill="#0c0c78" opacity="0.55" shape-rendering="crispEdges"/>
<text x="152.4" y="187.7" fill="#0c0c78" font-size="13.0" text-anchor="end">RGS6</text>
<rect x="157" y="199" width="792" height="1" fill="#1a80bb" shape-rendering="crispEdges"/>
<path d="M160 197h1v1h-1z M161 198h1v3h-1z M160 201h1v1h-1z M168 197h1v1h-1z M169 198h1v3h-1z M168 201h1v1h-1z M176 197h1v1h-1z M177 198h1v3h-1z M176 201h1v1h-1z M184 197h1v1h-1z M185 198h1v3h-1z M184 201h1v1h-1z M192 197h1v1h-1z M193 198h1v3h-1z M192 201h1v1h-1z M200 197h1v1h-1z M201 198h1v3h-1z M200 201h1v1h-1z M208 197h1v1h-1z M209 198h1v3h-1z M208 201h1v1h-1z M216 197h1v1h-1z M217 198h1v3h-1z M216 201h1v1h-1z M224 197h1v1h-1z M225 198h1v3h-1z M224 201h1v1h-1z M232 197h1v1h-1z M233 198h1v3h-1z M232 201h1v1h-1z M240 197h1v1h-1z M241 198h1v3h-1z M240 201h1v1h-1z M248 197h1v1h-1z M249 198h1v3h-1z M248 201h1v1h-1z M256 197h1v1h-1z M257 198h1v3h-1z M256 201h1v1h-1z M264 197h1v1h-1z M265 198h1v3h-1z M264 201h1v1h-1z M272 197h1v1h-1z M273 198h1v3h-1z M272 201h1v1h-1z M280 197h1v1h-1z M281 198h1v3h-1z M280 201h1v1h-1z M288 197h1v1h-1z M289 198h1v3h-1z M288 201h1v1h-1z M296 197h1v1h-1z M297 198h1v3h-1z M296 201h1v1h-1z M304 197h1v1h-1z M305 198h1v3h-1z M304 201h1v1h-1z M312 197h1v1h-1z M313 198h1v3h-1z M312 201h1v1h-1z M320 197h1v1h-1z M321 198h1v3h-1z M320 201h1v1h-1z M328 197h1v1h-1z M329 198h1v3h-1z M328 201h1v1h-1z M336 197h1v1h-1z M337 198h1v3h-1z M336 201h1v1h-1z M344 197h1v1h-1z M345 198h1v3h-1z M344 201h1v1h-1z M352 197h1v1h-1z M353 198h1v3h-1z M352 201h1v1h-1z M360 197h1v1h-1z M361 198h1v3h-1z M360 201h1v1h-1z M368 197h1v1h-1z M369 198h1v3h-1z M368 201h1v1h-1z M376 197h1v1h-1z M377 198h1v3h-1z M376 201h1v1h-1z M384 197h1v1h-1z M385 198h1v3h-1z M384 201h1v1h-1z M392 197h1v1h-1z M393 198h1v3h-1z M392 201h1v1h-1z M400 197h1v1h-1z M401 198h1v3h-1z M400 201h1v1h-1z M408 197h1v1h-1z M409 198h1v3h-1z M408 201h1v1h-1z M416 197h1v1h-1z M417 198h1v3h-1z M416 201h1v1h-1z M424 197h1v1h-1z M425 198h1v3h-1z M424 201h1v1h-1z M432 197h1v1h-1z M433 198h1v3h-1z M432 201h1v1h-1z M440 197h1v1h-1z M441 198h1v3h-1z M440 201h1v1h-1z M448 197h1v1h-1z M449 198h1v3h-1z M448 201h1v1h-1z M456 197h1v1h-1z M457 198h1v3h-1z M456 201h1v1h-1z M464 197h1v1h-1z M465 198h1v3h-1z M464 201h1v1h-1z M472 197h1v1h-1z M473 198h1v3h-1z M472 201h1v1h-1z M480 197h1v1h-1z M481 198h1v3h-1z M480 201h1v1h-1z M488 197h1v1h-1z M489 198h1v3h-1z M488 201h1v1h-1z M496 197h1v1h-1z M497 198h1v3h-1z M496 201h1v1h-1z M504 197h1v1h-1z M505 198h1v3h-1z M504 201h1v1h-1z M512 197h1v1h-1z M513 198h1v3h-1z M512 201h1v1h-1z M520 197h1v1h-1z M521 198h1v3h-1z M520 201h1v1h-1z M528 197h1v1h-1z M529 198h1v3h-1z M528 201h1v1h-1z M536 197h1v1h-1z M537 198h1v3h-1z M536 201h1v1h-1z M544 197h1v1h-1z M545 198h1v3h-1z M544 201h1v1h-1z M552 197h1v1h-1z M553 198h1v3h-1z M552 201h1v1h-1z M560 197h1v1h-1z M561 198h1v3h-1z M560 201h1v1h-1z M568 197h1v1h-1z M569 198h1v3h-1z M568 201h1v1h-1z M576 197h1v1h-1z M577 198h1v3h-1z M576 201h1v1h-1z M584 197h1v1h-1z M585 198h1v3h-1z M584 201h1v1h-1z M592 197h1v1h-1z M593 198h1v3h-1z M592 201h1v1h-1z M600 197h1v1h-1z M601 198h1v3h-1z M600 201h1v1h-1z M608 197h1v1h-1z M609 198h1v3h-1z M608 201h1v1h-1z M616 197h1v1h-1z M617 198h1v3h-1z M616 201h1v1h-1z M624 197h1v1h-1z M625 198h1v3h-1z M624 201h1v1h-1z M632 197h1v1h-1z M633 198h1v3h-1z M632 201h1v1h-1z M640 197h1v1h-1z M641 198h1v3h-1z M640 201h1v1h-1z M648 197h1v1h-1z M649 198h1v3h-1z M648 201h1v1h-1z M656 197h1v1h-1z M657 198h1v3h-1z M656 201h1v1h-1z M664 197h1v1h-1z M665 198h1v3h-1z M664 201h1v1h-1z M672 197h1v1h-1z M673 198h1v3h-1z M672 201h1v1h-1z M680 197h1v1h-1z M681 198h1v3h-1z M680 201h1v1h-1z M688 197h1v1h-1z M689 198h1v3h-1z M688 201h1v1h-1z M696 197h1v1h-1z M697 198h1v3h-1z M696 201h1v1h-1z M704 197h1v1h-1z M705 198h1v3h-1z M704 201h1v1h-1z M712 197h1v1h-1z M713 198h1v3h-1z M712 201h1v1h-1z M720 197h1v1h-1z M721 198h1v3h-1z M720 201h1v1h-1z M728 197h1v1h-1z M729 198h1v3h-1z M728 201h1v1h-1z M736 197h1v1h-1z M737 198h1v3h-1z M736 201h1v1h-1z M744 197h1v1h-1z M745 198h1v3h-1z M744 201h1v1h-1z M752 197h1v1h-1z M753 198h1v3h-1z M752 201h1v1h-1z M760 197h1v1h-1z M761 198h1v3h-1z M760 201h1v1h-1z M768 197h1v1h-1z M769 198h1v3h-1z M768 201h1v1h-1z M776 197h1v1h-1z M777 198h1v3h-1z M776 201h1v1h-1z M784 197h1v1h-1z M785 198h1v3h-1z M784 201h1v1h-1z M792 197h1v1h-1z M793 198h1v3h-1z M792 201h1v1h-1z M800 197h1v1h-1z M801 198h1v3h-1z M800 201h1v1h-1z M808 197h1v1h-1z M809 198h1v3h-1z M808 201h1v1h-1z M816 197h1v1h-1z M817 198h1v3h-1z M816 201h1v1h-1z M824 197h1v1h-1z M825 198h1v3h-1z M824 201h1v1h-1z M832 197h1v1h-1z M833 198h1v3h-1z M832 201h1v1h-1z M840 197h1v1h-1z M841 198h1v3h-1z M840 201h1v1h-1z M848 197h1v1h-1z M849 198h1v3h-1z M848 201h1v1h-1z M856 197h1v1h-1z M857 198h1v3h-1z M856 201h1v1h-1z M864 197h1v1h-1z M865 198h1v3h-1z M864 201h1v1h-1z M872 197h1v1h-1z M873 198h1v3h-1z M872 201h1v1h-1z M880 197h1v1h-1z M881 198h1v3h-1z M880 201h1v1h-1z M888 197h1v1h-1z M889 198h1v3h-1z M888 201h1v1h-1z M896 197h1v1h-1z M897 198h1v3h-1z M896 201h1v1h-1z M904 197h1v1h-1z M905 198h1v3h-1z M904 201h1v1h-1z M912 197h1v1h-1z M913 198h1v3h-1z M912 201h1v1h-1z M920 197h1v1h-1z M921 198h1v3h-1z M920 201h1v1h-1z M928 197h1v1h-1z M929 198h1v3h-1z M928 201h1v1h-1z M936 197h1v1h-1z M937 198h1v3h-1z M936 201h1v1h-1z M944 197h1v1h-1z M945 198h1v3h-1z M944 201h1v1h-1z" fill="#1a80bb" shape-rendering="crispEdges"/>
<path d="M159 196h1v1h-1z M159 202h1v1h-1z M167 196h1v1h-1z M167 202h1v1h-1z M175 196h1v1h-1z M175 202h1v1h-1z M183 196h1v1h-1z M183 202h1v1h-1z M191 196h1v1h-1z M191 202h1v1h-1z M199 196h1v1h-1z M199 202h1v1h-1z M207 196h1v1h-1z M207 202h1v1h-1z M215 196h1v1h-1z M215 202h1v1h-1z M223 196h1v1h-1z M223 202h1v1h-1z M231 196h1v1h-1z M231 202h1v1h-1z M239 196h1v1h-1z M239 202h1v1h-1z M247 196h1v1h-1z M247 202h1v1h-1z M255 196h1v1h-1z M255 202h1v1h-1z M263 196h1v1h-1z M263 202h1v1h-1z M271 196h1v1h-1z M271 202h1v1h-1z M279 196h1v1h-1z M279 202h1v1h-1z M287 196h1v1h-1z M287 202h1v1h-1z M295 196h1v1h-1z M295 202h1v1h-1z M303 196h1v1h-1z M303 202h1v1h-1z M311 196h1v1h-1z M311 202h1v1h-1z M319 196h1v1h-1z M319 202h1v1h-1z M327 196h1v1h-1z M327 202h1v1h-1z M335 196h1v1h-1z M335 202h1v1h-1z M343 196h1v1h-1z M343 202h1v1h-1z M351 196h1v1h-1z M351 202h1v1h-1z M359 196h1v1h-1z M359 202h1v1h-1z M367 196h1v1h-1z M367 202h1v1h-1z M375 196h1v1h-1z M375 202h1v1h-1z M383 196h1v1h-1z M383 202h1v1h-1z M391 196h1v1h-1z M391 202h1v1h-1z M399 196h1v1h-1z M399 202h1v1h-1z M407 196h1v1h-1z M407 202h1v1h-1z M415 196h1v1h-1z M415 202h1v1h-1z M423 196h1v1h-1z M423 202h1v1h-1z M431 196h1v1h-1z M431 202h1v1h-1z M439 196h1v1h-1z M439 202h1v1h-1z M447 196h1v1h-1z M447 202h1v1h-1z M455 196h1v1h-1z M455 202h1v1h-1z M463 196h1v1h-1z M463 202h1v1h-1z M471 196h1v1h-1z M471 202h1v1h-1z M479 196h1v1h-1z M479 202h1v1h-1z M487 196h1v1h-1z M487 202h1v1h-1z M495 196h1v1h-1z M495 202h1v1h-1z M503 196h1v1h-1z M503 202h1v1h-1z M511 196h1v1h-1z M511 202h1v1h-1z M519 196h1v1h-1z M519 202h1v1h-1z M527 196h1v1h-1z M527 202h1v1h-1z M535 196h1v1h-1z M535 202h1v1h-1z M543 196h1v1h-1z M543 202h1v1h-1z M551 196h1v1h-1z M551 202h1v1h-1z M559 196h1v1h-1z M559 202h1v1h-1z M567 196h1v1h-1z M567 202h1v1h-1z M575 196h1v1h-1z M575 202h1v1h-1z M583 196h1v1h-1z M583 202h1v1h-1z M591 196h1v1h-1z M591 202h1v1h-1z M599 196h1v1h-1z M599 202h1v1h-1z M607 196h1v1h-1z M607 202h1v1h-1z M615 196h1v1h-1z M615 202h1v1h-1z M623 196h1v1h-1z M623 202h1v1h-1z M631 196h1v1h-1z M631 202h1v1h-1z M639 196h1v1h-1z M639 202h1v1h-1z M647 196h1v1h-1z M647 202h1v1h-1z M655 196h1v1h-1z M655 202h1v1h-1z M663 196h1v1h-1z M663 202h1v1h-1z M671 196h1v1h-1z M671 202h1v1h-1z M679 196h1v1h-1z M679 202h1v1h-1z M687 196h1v1h-1z M687 202h1v1h-1z M695 196h1v1h-1z M695 202h1v1h-1z M703 196h1v1h-1z M703 202h1v1h-1z M711 196h1v1h-1z M711 202h1v1h-1z M719 196h1v1h-1z M719 202h1v1h-1z M727 196h1v1h-1z M727 202h1v1h-1z M735 196h1v1h-1z M735 202h1v1h-1z M743 196h1v1h-1z M743 202h1v1h-1z M751 196h1v1h-1z M751 202h1v1h-1z M759 196h1v1h-1z M759 202h1v1h-1z M767 196h1v1h-1z M767 202h1v1h-1z M775 196h1v1h-1z M775 202h1v1h-1z M783 196h1v1h-1z M783 202h1v1h-1z M791 196h1v1h-1z M791 202h1v1h-1z M799 196h1v1h-1z M799 202h1v1h-1z M807 196h1v1h-1z M807 202h1v1h-1z M815 196h1v1h-1z M815 202h1v1h-1z M823 196h1v1h-1z M823 202h1v1h-1z M831 196h1v1h-1z M831 202h1v1h-1z M839 196h1v1h-1z M839 202h1v1h-1z M847 196h1v1h-1z M847 202h1v1h-1z M855 196h1v1h-1z M855 202h1v1h-1z M863 196h1v1h-1z M863 202h1v1h-1z M871 196h1v1h-1z M871 202h1v1h-1z M879 196h1v1h-1z M879 202h1v1h-1z M887 196h1v1h-1z M887 202h1v1h-1z M895 196h1v1h-1z M895 202h1v1h-1z M903 196h1v1h-1z M903 202h1v1h-1z M911 196h1v1h-1z M911 202h1v1h-1z M919 196h1v1h-1z M919 202h1v1h-1z M927 196h1v1h-1z M927 202h1v1h-1z M935 196h1v1h-1z M935 202h1v1h-1z M943 196h1v1h-1z M943 202h1v1h-1z" fill="#1a80bb" opacity="0.55" shape-rendering="crispEdges"/>
<text x="152.4" y="203.7" fill="#1a80bb" font-size="13.0" text-anchor="end">RGS6</text>
<text x="491.5" y="219.7" fill="#000" font-size="11.0" textLength="122" lengthAdjust="spacingAndGlyphs">RefSeq genes from NCBI</text>
<text x="152.4" y="234.6" fill="#0c0c78" font-size="13.0" text-anchor="end">RefSeq Curated</text>
<rect x="157" y="230" width="792" height="1" fill="#0c0c78" shape-rendering="crispEdges"/>
<text x="445.5" y="250.8" fill="#000" font-size="11.0" textLength="213.5" lengthAdjust="spacingAndGlyphs">Publications: Sequences in Scientific Articles</text>
<text x="152.4" y="265.7" fill="#000" font-size="13.0" text-anchor="end">Sequences</text>
<text x="152.4" y="282" fill="#000" font-size="13.0" text-anchor="end">SNPs</text>
<text x="367.6" y="298.7" fill="#006400" font-size="13.0" textLength="370.3" lengthAdjust="spacingAndGlyphs">OMIM Gene Phenotypes - Dark Green Can Be Disease-causing</text>
<text x="152.4" y="313" fill="#006400" font-size="13.0" text-anchor="end">OMIM Genes</text>
<rect x="156" y="301" width="793" height="15" fill="#bebebe" shape-rendering="crispEdges"/>
<text x="436" y="328.6" fill="#000" font-size="11.0" textLength="232.6" lengthAdjust="spacingAndGlyphs">Short Genetic Variants from dbSNP release 155</text>
<text x="152.4" y="343.5" fill="#000" font-size="13.0" text-anchor="end">Common dbSNP(155)</text>
<text x="265.7" y="360.5" fill="#000" font-size="13.0" textLength="573" lengthAdjust="spacingAndGlyphs">Gene Expression in 54 tissues from GTEx RNA-seq of 17382 samples, 948 donors (V8, Aug 2019)</text>
<text x="152.4" y="385.6" fill="#000" font-size="13.0" text-anchor="end">RGS6</text>
<rect x="156.5" y="364.5" width="377" height="30" fill="#fff" stroke="#f0f0f0" stroke-width="1" shape-rendering="crispEdges"/>
<rect x="156" y="374" width="5" height="20" fill="#FFA54F" shape-rendering="crispEdges"/>
<rect x="163" y="375" width="5" height="19" fill="#EE9A00" shape-rendering="crispEdges"/>
<rect x="170" y="393" width="5" height="1" fill="#8FBC8F" shape-rendering="crispEdges"/>
<rect x="177" y="392" width="5" height="2" fill="#8B1C62" shape-rendering="crispEdges"/>
<rect x="184" y="376" width="5" height="18" fill="#EE6A50" shape-rendering="crispEdges"/>
<rect x="191" y="372" width="5" height="22" fill="#FF0000" shape-rendering="crispEdges"/>
<rect x="198" y="389" width="5" height="5" fill="#CDB79E" shape-rendering="crispEdges"/>
<rect x="205" y="383" width="5" height="11" fill="#EEEE00" shape-rendering="crispEdges"/>
<rect x="212" y="374" width="5" height="20" fill="#EEEE00" shape-rendering="crispEdges"/>
<rect x="219" y="386" width="5" height="8" fill="#EEEE00" shape-rendering="crispEdges"/>
<rect x="226" y="379" width="5" height="15" fill="#EEEE00" shape-rendering="crispEdges"/>
<rect x="233" y="375" width="5" height="19" fill="#EEEE00" shape-rendering="crispEdges"/>
<rect x="240" y="364" width="5" height="30" fill="#EEEE00" shape-rendering="crispEdges"/>
<rect x="247" y="365" width="5" height="29" fill="#EEEE00" shape-rendering="crispEdges"/>
<rect x="254" y="387" width="5" height="7" fill="#EEEE00" shape-rendering="crispEdges"/>
<rect x="261" y="376" width="5" height="18" fill="#EEEE00" shape-rendering="crispEdges"/>
<rect x="268" y="378" width="5" height="16" fill="#EEEE00" shape-rendering="crispEdges"/>
<rect x="275" y="389" width="5" height="5" fill="#EEEE00" shape-rendering="crispEdges"/>
<rect x="282" y="381" width="5" height="13" fill="#EEEE00" shape-rendering="crispEdges"/>
<rect x="289" y="371" width="5" height="23" fill="#EEEE00" shape-rendering="crispEdges"/>
<rect x="296" y="376" width="5" height="18" fill="#00CDCD" shape-rendering="crispEdges"/>
<rect x="303" y="390" width="5" height="4" fill="#EE82EE" shape-rendering="crispEdges"/>
<rect x="317" y="382" width="5" height="12" fill="#EED5D2" shape-rendering="crispEdges"/>
<rect x="324" y="378" width="5" height="16" fill="#EED5D2" shape-rendering="crispEdges"/>
<rect x="331" y="390" width="5" height="4" fill="#CDB79E" shape-rendering="crispEdges"/>
<rect x="338" y="389" width="5" height="5" fill="#EEC591" shape-rendering="crispEdges"/>
<rect x="345" y="388" width="5" height="6" fill="#8B7355" shape-rendering="crispEdges"/>
<rect x="352" y="392" width="5" height="2" fill="#8B7355" shape-rendering="crispEdges"/>
<rect x="359" y="390" width="5" height="4" fill="#CDAA7D" shape-rendering="crispEdges"/>
<rect x="366" y="382" width="5" height="12" fill="#EED5D2" shape-rendering="crispEdges"/>
<rect x="373" y="374" width="5" height="20" fill="#B452CD" shape-rendering="crispEdges"/>
<rect x="380" y="378" width="5" height="16" fill="#7A378B" shape-rendering="crispEdges"/>
<rect x="387" y="390" width="5" height="4" fill="#CDB79E" shape-rendering="crispEdges"/>
<rect x="394" y="382" width="5" height="12" fill="#CDB79E" shape-rendering="crispEdges"/>
<rect x="408" y="388" width="5" height="6" fill="#9ACD32" shape-rendering="crispEdges"/>
<rect x="415" y="388" width="5" height="6" fill="#CDB79E" shape-rendering="crispEdges"/>
<rect x="422" y="391" width="5" height="3" fill="#7A67EE" shape-rendering="crispEdges"/>
<rect x="429" y="364" width="5" height="30" fill="#FFD700" shape-rendering="crispEdges"/>
<rect x="436" y="387" width="5" height="7" fill="#FFB6C1" shape-rendering="crispEdges"/>
<rect x="450" y="383" width="5" height="11" fill="#B4EEB4" shape-rendering="crispEdges"/>
<rect x="457" y="391" width="5" height="3" fill="#D9D9D9" shape-rendering="crispEdges"/>
<rect x="464" y="389" width="5" height="5" fill="#3A5FCD" shape-rendering="crispEdges"/>
<rect x="471" y="387" width="5" height="7" fill="#1E90FF" shape-rendering="crispEdges"/>
<rect x="478" y="389" width="5" height="5" fill="#CDB79E" shape-rendering="crispEdges"/>
<rect x="485" y="387" width="5" height="7" fill="#CDB79E" shape-rendering="crispEdges"/>
<rect x="492" y="392" width="5" height="2" fill="#FFD39B" shape-rendering="crispEdges"/>
<rect x="499" y="369" width="5" height="25" fill="#A6A6A6" shape-rendering="crispEdges"/>
<rect x="506" y="373" width="5" height="21" fill="#008B45" shape-rendering="crispEdges"/>
<rect x="513" y="384" width="5" height="10" fill="#EED5D2" shape-rendering="crispEdges"/>
<rect x="520" y="389" width="5" height="5" fill="#EED5D2" shape-rendering="crispEdges"/>
<rect x="527" y="390" width="5" height="4" fill="#FF00FF" shape-rendering="crispEdges"/>
<rect x="156" y="395" width="793" height="2" fill="#000080" shape-rendering="crispEdges"/>
<text x="281.2" y="412" fill="#000" font-size="13.0" textLength="541.6" lengthAdjust="spacingAndGlyphs">H3K27Ac Mark (Often Found Near Active Regulatory Elements) on 7 cell lines from ENCODE</text>
<text x="13.6" y="426" fill="#000" font-size="13.0" textLength="104" lengthAdjust="spacingAndGlyphs">Layered H3K27Ac</text>
<rect x="156" y="443" width="793" height="1" fill="#7a3040" shape-rendering="crispEdges"/>
<text x="405.9" y="458" fill="#3c3c8c" font-size="13.0" textLength="293.5" lengthAdjust="spacingAndGlyphs">100 vertebrates Basewise Conservation by PhyloP</text>
<text x="141" y="457" fill="#3c3c8c" font-size="13.0" text-anchor="end">4.88</text>
<rect x="145" y="458" width="8" height="1" fill="#3c3c8c" opacity="0.85" shape-rendering="crispEdges"/>
<text x="12.8" y="482" fill="#3c3c8c" font-size="13.0" textLength="87.8" lengthAdjust="spacingAndGlyphs">100 Vert. Cons</text>
<text x="141" y="507" fill="#8c3c3c" font-size="13.0" text-anchor="end">-4.5</text>
<rect x="145" y="508" width="8" height="1" fill="#8c3c3c" opacity="0.85" shape-rendering="crispEdges"/>
<path d="M158.40 485.10 L174.72 477.00 L182.98 477.00 L198.70 485.10 Z M165.09 485.10 L169.48 482.86 L187.58 482.86 L191.97 485.10 Z M171.38 481.92 L178.55 478.04 L185.80 481.92 Z" fill="#ff0000" fill-rule="evenodd"/>
<path d="M317.00 485.80 L333.63 471.00 L342.04 471.00 L358.05 485.80 Z M323.81 485.80 L328.29 481.70 L346.72 481.70 L351.19 485.80 Z M330.22 480.00 L337.52 472.89 L344.91 480.00 Z" fill="#ff0000" fill-rule="evenodd"/>
<path d="M581.60 484.90 L597.92 476.90 L606.18 476.90 L621.90 484.90 Z M588.29 484.90 L592.68 482.68 L610.78 482.68 L615.17 484.90 Z M594.58 481.76 L601.75 477.92 L609.00 481.76 Z" fill="#ff0000" fill-rule="evenodd"/>
<path d="M634.60 485.00 L650.92 476.90 L659.18 476.90 L674.90 485.00 Z M641.29 485.00 L645.68 482.76 L663.78 482.76 L668.17 485.00 Z M647.58 481.82 L654.75 477.94 L662.00 481.82 Z" fill="#ff0000" fill-rule="evenodd"/>
<path d="M423.40 485.00 L439.60 483.00 L447.80 483.00 L463.40 485.00 Z M430.04 485.00 L434.40 484.45 L452.36 484.45 L456.72 485.00 Z M436.28 484.22 L443.40 483.26 L450.60 484.22 Z" fill="#ff0000" fill-rule="evenodd"/>
<path d="M687.50 485.00 L703.70 483.00 L711.90 483.00 L727.50 485.00 Z M694.14 485.00 L698.50 484.45 L716.46 484.45 L720.82 485.00 Z M700.38 484.22 L707.50 483.26 L714.70 484.22 Z" fill="#ff0000" fill-rule="evenodd"/>
<rect x="266.5" y="484" width="42.5" height="1" fill="#0000ff" opacity="0.35" shape-rendering="crispEdges"/>
<rect x="266.5" y="484" width="10" height="1" fill="#0000ff" opacity="0.5" shape-rendering="crispEdges"/>
<rect x="295" y="484" width="14" height="1" fill="#0000ff" opacity="0.5" shape-rendering="crispEdges"/>
<rect x="795.2" y="484" width="43" height="1" fill="#0000ff" opacity="0.35" shape-rendering="crispEdges"/>
<rect x="795.2" y="484" width="10" height="1" fill="#0000ff" opacity="0.45" shape-rendering="crispEdges"/>
<rect x="828" y="484" width="10" height="1" fill="#0000ff" opacity="0.6" shape-rendering="crispEdges"/>
<rect x="476" y="486" width="38" height="1" fill="#00ff00" opacity="0.15" shape-rendering="crispEdges"/>
<rect x="492" y="486" width="6" height="1" fill="#00dd00" shape-rendering="crispEdges"/>
<rect x="740" y="484" width="38" height="1" fill="#00ff00" opacity="0.15" shape-rendering="crispEdges"/>
<rect x="756" y="484" width="6" height="1" fill="#00dd00" shape-rendering="crispEdges"/>
<text x="445" y="524" fill="#0c0c78" font-size="13.0" textLength="214.6" lengthAdjust="spacingAndGlyphs">Multiz Alignments of 100 Vertebrates</text>
<text x="152.4" y="537.7" fill="#e0861a" font-size="13.0" text-anchor="end">Gaps</text>
<text x="152.4" y="552.5" fill="#0c0c78" font-size="13.0" text-anchor="end">Human</text>
<text x="152.4" y="567.5" fill="#0c0c78" font-size="13.0" text-anchor="end">Rhesus</text>
<text x="152.4" y="582.5" fill="#006400" font-size="13.0" text-anchor="end">Mouse</text>
<text x="152.4" y="597.5" fill="#0c0c78" font-size="13.0" text-anchor="end">Dog</text>
<text x="152.4" y="612.5" fill="#006400" font-size="13.0" text-anchor="end">Elephant</text>
<text x="152.4" y="627.5" fill="#006400" font-size="13.0" text-anchor="end">Chicken</text>
<text x="152.4" y="642.5" fill="#0c0c78" font-size="13.0" text-anchor="end">X_tropicalis</text>
<text x="152.4" y="657.5" fill="#006400" font-size="13.0" text-anchor="end">Zebrafish</text>
<text x="180.1" y="552.5" fill="#0c0c78" font-size="13.0" text-anchor="middle">A</text>
<text x="233.0" y="552.5" fill="#0c0c78" font-size="13.0" text-anchor="middle">G</text>
<text x="285.9" y="552.5" fill="#0c0c78" font-size="13.0" text-anchor="middle">G</text>
<text x="338.7" y="552.5" fill="#0c0c78" font-size="13.0" text-anchor="middle">A</text>
<text x="391.6" y="552.5" fill="#0c0c78" font-size="13.0" text-anchor="middle">G</text>
<text x="444.5" y="552.5" fill="#0c0c78" font-size="13.0" text-anchor="middle">A</text>
<text x="497.4" y="552.5" fill="#0c0c78" font-size="13.0" text-anchor="middle">T</text>
<text x="550.2" y="552.5" fill="#0c0c78" font-size="13.0" text-anchor="middle">A</text>
<text x="603.1" y="552.5" fill="#0c0c78" font-size="13.0" text-anchor="middle">A</text>
<text x="656.0" y="552.5" fill="#0c0c78" font-size="13.0" text-anchor="middle">A</text>
<text x="708.8" y="552.5" fill="#0c0c78" font-size="13.0" text-anchor="middle">A</text>
<text x="761.7" y="552.5" fill="#0c0c78" font-size="13.0" text-anchor="middle">T</text>
<text x="814.6" y="552.5" fill="#0c0c78" font-size="13.0" text-anchor="middle">A</text>
<text x="867.4" y="552.5" fill="#0c0c78" font-size="13.0" text-anchor="middle">T</text>
<text x="920.3" y="552.5" fill="#0c0c78" font-size="13.0" text-anchor="middle">G</text>
<text x="180.1" y="567.5" fill="#0c0c78" font-size="13.0" text-anchor="middle">A</text>
<text x="233.0" y="567.5" fill="#0c0c78" font-size="13.0" text-anchor="middle">G</text>
<text x="285.9" y="567.5" fill="#0c0c78" font-size="13.0" text-anchor="middle">G</text>
<text x="338.7" y="567.5" fill="#0c0c78" font-size="13.0" text-anchor="middle">A</text>
<text x="391.6" y="567.5" fill="#0c0c78" font-size="13.0" text-anchor="middle">G</text>
<text x="444.5" y="567.5" fill="#0c0c78" font-size="13.0" text-anchor="middle">A</text>
<text x="497.4" y="567.5" fill="#0c0c78" font-size="13.0" text-anchor="middle">T</text>
<text x="550.2" y="567.5" fill="#0c0c78" font-size="13.0" text-anchor="middle">A</text>
<text x="603.1" y="567.5" fill="#0c0c78" font-size="13.0" text-anchor="middle">A</text>
<text x="656.0" y="567.5" fill="#0c0c78" font-size="13.0" text-anchor="middle">A</text>
<text x="708.8" y="567.5" fill="#0c0c78" font-size="13.0" text-anchor="middle">A</text>
<text x="761.7" y="567.5" fill="#0c0c78" font-size="13.0" text-anchor="middle">T</text>
<text x="814.6" y="567.5" fill="#0c0c78" font-size="13.0" text-anchor="middle">A</text>
<text x="867.4" y="567.5" fill="#0c0c78" font-size="13.0" text-anchor="middle">T</text>
<text x="920.3" y="567.5" fill="#0c0c78" font-size="13.0" text-anchor="middle">G</text>
<text x="180.1" y="582.5" fill="#0c0c78" font-size="13.0" text-anchor="middle">A</text>
<text x="233.0" y="582.5" fill="#0c0c78" font-size="13.0" text-anchor="middle">G</text>
<text x="285.9" y="582.5" fill="#0c0c78" font-size="13.0" text-anchor="middle">G</text>
<text x="338.7" y="582.5" fill="#0c0c78" font-size="13.0" text-anchor="middle">A</text>
<text x="391.6" y="582.5" fill="#0c0c78" font-size="13.0" text-anchor="middle">G</text>
<text x="444.5" y="582.5" fill="#0c0c78" font-size="13.0" text-anchor="middle">A</text>
<text x="497.4" y="582.5" fill="#0c0c78" font-size="13.0" text-anchor="middle">T</text>
<text x="550.2" y="582.5" fill="#0c0c78" font-size="13.0" text-anchor="middle">A</text>
<text x="603.1" y="582.5" fill="#0c0c78" font-size="13.0" text-anchor="middle">A</text>
<text x="656.0" y="582.5" fill="#0c0c78" font-size="13.0" text-anchor="middle">A</text>
<text x="708.8" y="582.5" fill="#0c0c78" font-size="13.0" text-anchor="middle">A</text>
<text x="761.7" y="582.5" fill="#0c0c78" font-size="13.0" text-anchor="middle">T</text>
<text x="814.6" y="582.5" fill="#0c0c78" font-size="13.0" text-anchor="middle">A</text>
<text x="867.4" y="582.5" fill="#8080b0" font-size="13.0" text-anchor="middle">A</text>
<text x="920.3" y="582.5" fill="#0c0c78" font-size="13.0" text-anchor="middle">G</text>
<text x="180.1" y="597.5" fill="#0c0c78" font-size="13.0" text-anchor="middle">A</text>
<text x="233.0" y="597.5" fill="#0c0c78" font-size="13.0" text-anchor="middle">G</text>
<text x="285.9" y="597.5" fill="#0c0c78" font-size="13.0" text-anchor="middle">G</text>
<text x="338.7" y="597.5" fill="#0c0c78" font-size="13.0" text-anchor="middle">A</text>
<text x="391.6" y="597.5" fill="#0c0c78" font-size="13.0" text-anchor="middle">G</text>
<text x="444.5" y="597.5" fill="#0c0c78" font-size="13.0" text-anchor="middle">A</text>
<text x="497.4" y="597.5" fill="#0c0c78" font-size="13.0" text-anchor="middle">T</text>
<text x="550.2" y="597.5" fill="#0c0c78" font-size="13.0" text-anchor="middle">A</text>
<text x="603.1" y="597.5" fill="#0c0c78" font-size="13.0" text-anchor="middle">A</text>
<text x="656.0" y="597.5" fill="#0c0c78" font-size="13.0" text-anchor="middle">A</text>
<text x="708.8" y="597.5" fill="#0c0c78" font-size="13.0" text-anchor="middle">A</text>
<text x="761.7" y="597.5" fill="#0c0c78" font-size="13.0" text-anchor="middle">T</text>
<text x="814.6" y="597.5" fill="#8080b0" font-size="13.0" text-anchor="middle">G</text>
<text x="867.4" y="597.5" fill="#0c0c78" font-size="13.0" text-anchor="middle">T</text>
<text x="920.3" y="597.5" fill="#0c0c78" font-size="13.0" text-anchor="middle">G</text>
<text x="180.1" y="612.5" fill="#8080b0" font-size="13.0" text-anchor="middle">N</text>
<text x="233.0" y="612.5" fill="#8080b0" font-size="13.0" text-anchor="middle">N</text>
<text x="285.9" y="612.5" fill="#8080b0" font-size="13.0" text-anchor="middle">N</text>
<text x="338.7" y="612.5" fill="#8080b0" font-size="13.0" text-anchor="middle">N</text>
<text x="391.6" y="612.5" fill="#8080b0" font-size="13.0" text-anchor="middle">N</text>
<text x="444.5" y="612.5" fill="#8080b0" font-size="13.0" text-anchor="middle">N</text>
<text x="497.4" y="612.5" fill="#8080b0" font-size="13.0" text-anchor="middle">N</text>
<text x="550.2" y="612.5" fill="#8080b0" font-size="13.0" text-anchor="middle">N</text>
<text x="603.1" y="612.5" fill="#8080b0" font-size="13.0" text-anchor="middle">N</text>
<text x="656.0" y="612.5" fill="#8080b0" font-size="13.0" text-anchor="middle">N</text>
<text x="708.8" y="612.5" fill="#8080b0" font-size="13.0" text-anchor="middle">N</text>
<text x="761.7" y="612.5" fill="#8080b0" font-size="13.0" text-anchor="middle">N</text>
<text x="814.6" y="612.5" fill="#8080b0" font-size="13.0" text-anchor="middle">N</text>
<text x="867.4" y="612.5" fill="#8080b0" font-size="13.0" text-anchor="middle">N</text>
<text x="920.3" y="612.5" fill="#8080b0" font-size="13.0" text-anchor="middle">N</text>
<text x="441.2" y="673.7" fill="#000" font-size="13.0" textLength="223.6" lengthAdjust="spacingAndGlyphs">Repeating Elements by RepeatMasker</text>
<text x="152.4" y="687.5" fill="#000" font-size="13.0" text-anchor="end">RepeatMasker</text>
</g>
</svg>
</body></html>
